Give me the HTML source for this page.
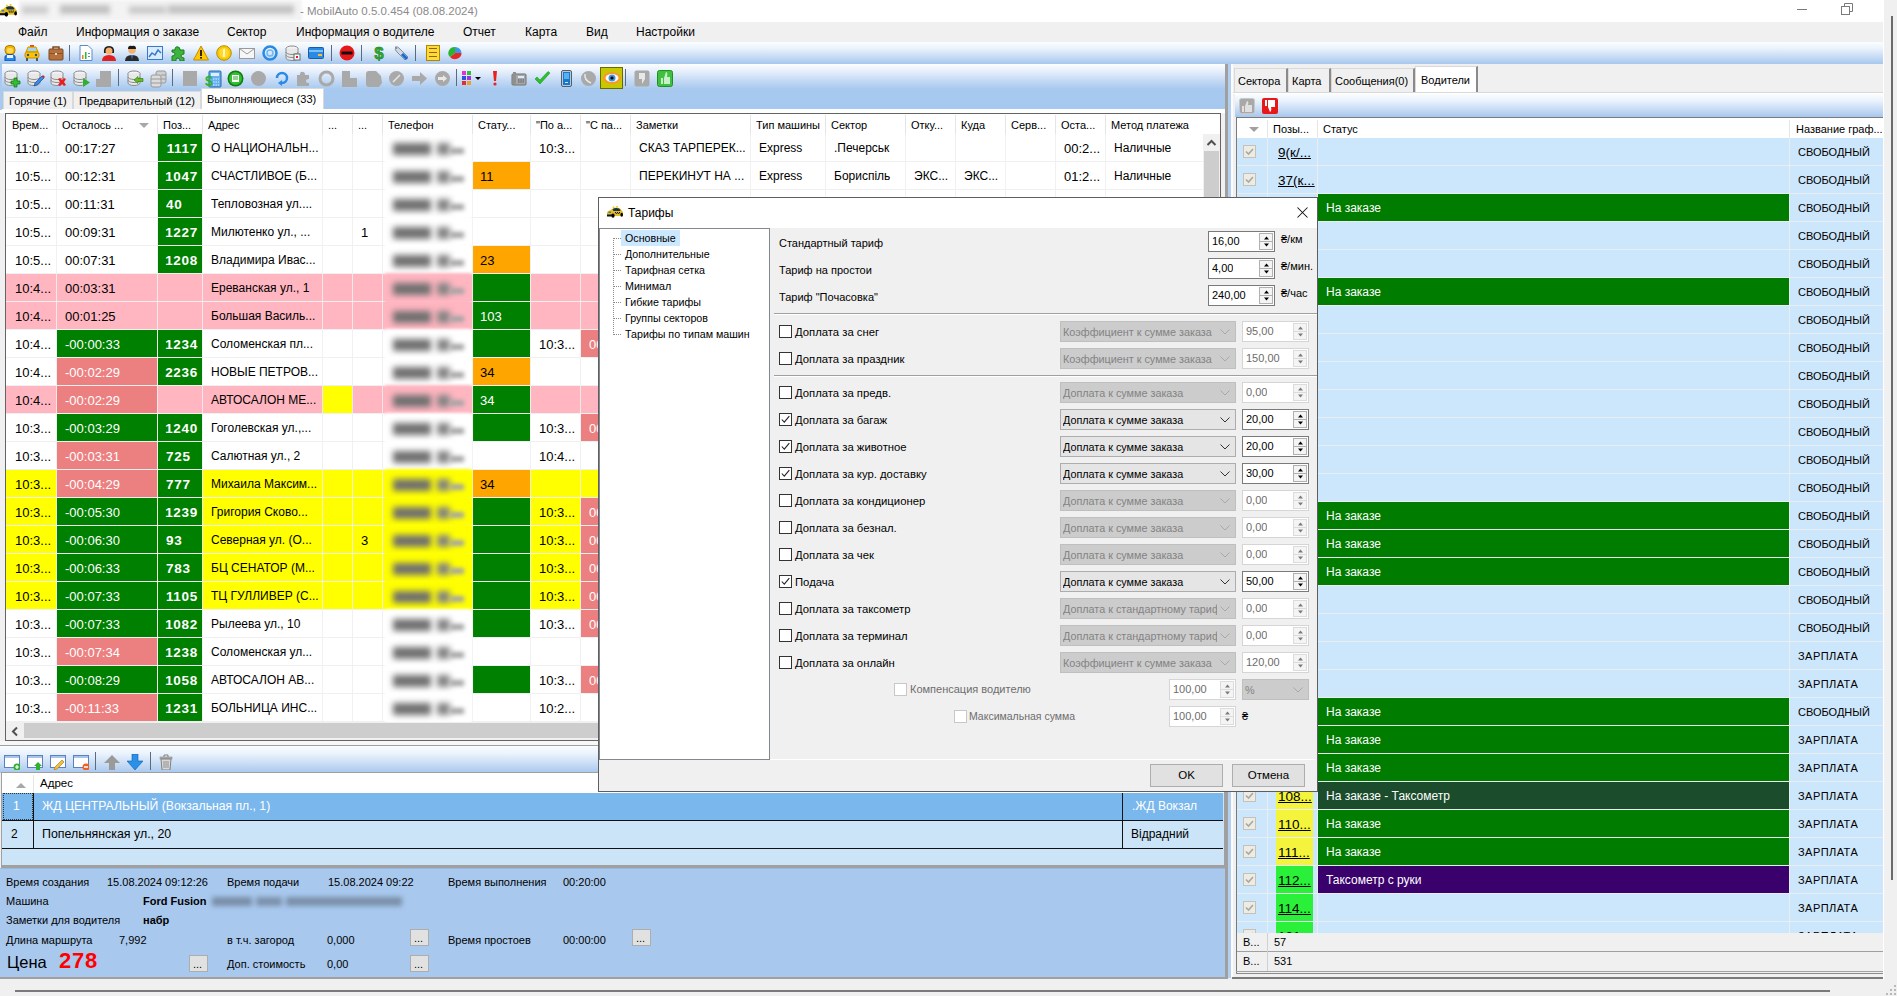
<!DOCTYPE html><html><head><meta charset="utf-8"><style>
*{box-sizing:border-box}
html,body{margin:0;padding:0;width:1897px;height:996px;overflow:hidden;background:#f0f0f0;font-family:"Liberation Sans",sans-serif;font-size:12px;color:#000}
.t{position:absolute;white-space:pre;line-height:14px}
.a{position:absolute}
.c{position:absolute;white-space:pre;overflow:hidden;line-height:27px}
</style></head><body>
<div class="a" style="left:0px;top:0px;width:1883px;height:22px;background:#fff"></div>
<div class="a" style="left:1883px;top:0px;width:14px;height:996px;background:#f0f0f0"></div>
<div class="a" style="left:1891px;top:16px;width:2px;height:864px;background:#6b6b6b"></div>
<div class="a" style="left:1883px;top:0px;width:1px;height:980px;background:#fff"></div>
<svg class="a" style="left:0;top:4px" width="17" height="13" viewBox="0 0 16 12"><path d="M5 3 Q6 1.5 9 1.5 Q13 1.5 14 3.5 L15 5 L16 6 V10 H0 V7 Q0 5 3 4.5 Z" fill="#e2be20"/><path d="M5.5 3.2 Q7 2 9.5 2 Q12.5 2 13.5 4 L13.2 5 H6.5 Z" fill="#17324e"/><circle cx="6.5" cy="1.3" r="1" fill="#f0cc30"/><circle cx="10" cy="0.8" r="1" fill="#f0cc30"/><path d="M8 6.5 H13.5 M8.8 7.5 H13" stroke="#111" stroke-dasharray="1 1" stroke-width="1"/><rect x="1.5" y="5.5" width="2.5" height="1.5" fill="#4a78a8"/><path d="M0 8.5 H7 V10.5 H0 Z" fill="#111"/><ellipse cx="6" cy="9.6" rx="1.6" ry="2.2" fill="#000"/><ellipse cx="14.7" cy="8.8" rx="1.3" ry="2" fill="#000"/></svg>
<div class="a" style="left:19px;top:0px;width:283px;height:21px;background:#f3f3f3;filter:blur(1.5px)"></div>
<div class="a" style="left:0px;top:0px;width:300px;height:20px;filter:blur(2.5px)"><div class="a" style="left:22px;top:6px;width:26px;height:8px;background:#cdcdcd"></div><div class="a" style="left:60px;top:5px;width:50px;height:9px;background:#c2c2c2"></div><div class="a" style="left:129px;top:6px;width:37px;height:8px;background:#cbcbcb"></div><div class="a" style="left:168px;top:5px;width:126px;height:9px;background:#c4c4c4"></div></div>
<div class="t" style="left:300px;top:4px;color:#8a8a8a;font-size:11.5px">- MobilAuto 0.5.0.454 (08.08.2024)</div>
<div class="a" style="left:1797px;top:9px;width:10px;height:1px;background:#7a7a7a"></div>
<svg class="a" style="left:1841px;top:3px" width="12" height="12"><rect x="0.5" y="3.5" width="8" height="8" fill="none" stroke="#7a7a7a"/><path d="M3.5 3.5 V0.5 H11.5 V8.5 H8.5" fill="none" stroke="#7a7a7a"/></svg>
<div class="t" style="left:18px;top:25px;font-size:12px">Файл</div>
<div class="t" style="left:76px;top:25px;font-size:12px">Информация о заказе</div>
<div class="t" style="left:227px;top:25px;font-size:12px">Сектор</div>
<div class="t" style="left:296px;top:25px;font-size:12px">Информация о водителе</div>
<div class="t" style="left:463px;top:25px;font-size:12px">Отчет</div>
<div class="t" style="left:525px;top:25px;font-size:12px">Карта</div>
<div class="t" style="left:586px;top:25px;font-size:12px">Вид</div>
<div class="t" style="left:636px;top:25px;font-size:12px">Настройки</div>
<div class="a" style="left:0px;top:42px;width:1883px;height:22px;background:linear-gradient(#fbfdff 0%,#e9f2fc 30%,#c9ddf5 65%,#a7c7ee 100%)"></div>
<svg class="a" style="left:2px;top:45px" width="16" height="16" viewBox="0 0 16 16"><rect x="3" y="0.5" width="10" height="9" rx="4" fill="#f5b800" stroke="#b07800"/><rect x="5" y="3" width="6" height="5" rx="2" fill="#ffd860"/><path d="M3 16 V12 Q3 9.5 8 9.5 Q13 9.5 13 12 V16 Z" fill="#2a88f0" stroke="#0b4fa0"/><rect x="5" y="10" width="6" height="3" fill="#e8f4ff"/></svg>
<svg class="a" style="left:24px;top:45px" width="16" height="16" viewBox="0 0 16 16"><rect x="6" y="0" width="4" height="2" fill="#e04040"/><path d="M2 7 L4 2 H12 L14 7 Z" fill="#ffd000" stroke="#c89400"/><rect x="1" y="7" width="14" height="6" rx="2" fill="#ffc000" stroke="#c89400"/><rect x="4" y="3" width="8" height="3" fill="#9fd4ff"/><circle cx="4" cy="10" r="1.2" fill="#2050a0"/><circle cx="12" cy="10" r="1.2" fill="#2050a0"/><rect x="2" y="13" width="2" height="3" fill="#555"/><rect x="12" y="13" width="2" height="3" fill="#555"/></svg>
<svg class="a" style="left:48px;top:45px" width="16" height="16" viewBox="0 0 16 16"><path d="M5 4 V2 H11 V4" fill="none" stroke="#7a4a20" stroke-width="1.5"/><rect x="1" y="4" width="14" height="11" rx="1" fill="#b8703a" stroke="#7a4a20"/><rect x="1" y="8" width="14" height="1" fill="#8c5228"/><circle cx="8" cy="9" r="1" fill="#fff"/></svg>
<svg class="a" style="left:78px;top:45px" width="16" height="16" viewBox="0 0 16 16"><path d="M2 0.5 H10 L14 4.5 V15.5 H2 Z" fill="#fff" stroke="#5a8cc8"/><rect x="4" y="10" width="1.5" height="4" fill="#f08020"/><rect x="7" y="7" width="1.5" height="7" fill="#20c020"/><rect x="10" y="8" width="2" height="1" fill="#5a8cc8"/><rect x="10" y="11" width="2" height="1" fill="#5a8cc8"/></svg>
<svg class="a" style="left:101px;top:45px" width="16" height="16" viewBox="0 0 16 16"><path d="M3 8 Q2 1 8 1 Q14 1 13 8 Z" fill="#1a1a1a"/><circle cx="8" cy="6" r="3.5" fill="#f5b070"/><path d="M1 16 Q1 10 8 10 Q15 10 15 16 Z" fill="#e02020"/></svg>
<svg class="a" style="left:124px;top:45px" width="16" height="16" viewBox="0 0 16 16"><circle cx="8" cy="5" r="3.8" fill="#f5b070"/><path d="M4 4 Q4 0 8 1 Q12 0 12 4 Z" fill="#1a1a1a"/><path d="M1 16 Q1 10 8 10 Q15 10 15 16 Z" fill="#2a2a2a"/><path d="M7 10 L8 15 L9 10 Z" fill="#3a7ad0"/></svg>
<svg class="a" style="left:147px;top:45px" width="16" height="16" viewBox="0 0 16 16"><rect x="0.5" y="1.5" width="15" height="13" fill="#d8ecff" stroke="#3a78c8"/><path d="M2 12 L5 8 L8 10 L11 5 L14 8" fill="none" stroke="#3a78c8" stroke-width="1.5"/></svg>
<svg class="a" style="left:170px;top:45px" width="16" height="16" viewBox="0 0 16 16"><path d="M2 5 H5 Q5 1 8 2 Q10 2 10 5 H14 V9 Q11 9 11 11 Q11 13 14 13 V16 H10 Q10 13 8 13 Q5 13 6 16 H2 V11 Q5 11 5 9 Q5 7 2 7 Z" fill="#3cb43c" stroke="#1e7a1e"/></svg>
<svg class="a" style="left:193px;top:45px" width="16" height="16" viewBox="0 0 16 16"><path d="M8 1 L15.5 15 H0.5 Z" fill="#ffc800" stroke="#c88a00"/><rect x="7.2" y="5" width="1.6" height="6" fill="#000"/><rect x="7.2" y="12" width="1.6" height="1.6" fill="#000"/></svg>
<svg class="a" style="left:216px;top:45px" width="16" height="16" viewBox="0 0 16 16"><circle cx="8" cy="8" r="7.3" fill="#f7c800" stroke="#c08c00"/><circle cx="8" cy="8" r="5" fill="#ffd930"/><path d="M7 4.5 L9 3.5 V12 H7 Z" fill="#fff6c0"/></svg>
<svg class="a" style="left:239px;top:45px" width="16" height="16" viewBox="0 0 16 16"><rect x="0.5" y="3.5" width="15" height="10" fill="#f6f6f6" stroke="#9a9a9a"/><path d="M0.5 3.5 L8 9 L15.5 3.5" fill="none" stroke="#9a9a9a"/></svg>
<svg class="a" style="left:262px;top:45px" width="16" height="16" viewBox="0 0 16 16"><circle cx="8" cy="8" r="6.5" fill="none" stroke="#2a8ae0" stroke-width="2.5"/><circle cx="8" cy="8" r="3" fill="none" stroke="#6ab8f8" stroke-width="1.5"/></svg>
<svg class="a" style="left:285px;top:45px" width="16" height="16" viewBox="0 0 16 16"><ellipse cx="7" cy="3.5" rx="6" ry="2.5" fill="#f4f4f4" stroke="#8c8c8c"/><path d="M1 3.5 V13 A6 2.5 0 0 0 13 13 V3.5" fill="#e8e8e8" stroke="#8c8c8c"/><path d="M1 7 A6 2.5 0 0 0 13 7 M1 10 A6 2.5 0 0 0 13 10" fill="none" stroke="#8c8c8c"/><rect x="9" y="9" width="6" height="6" fill="#fff" stroke="#666"/><rect x="11" y="11" width="2" height="2" fill="#e02020"/></svg>
<svg class="a" style="left:308px;top:45px" width="16" height="16" viewBox="0 0 16 16"><rect x="0.5" y="2.5" width="15" height="11" rx="1" fill="#2a8ae0" stroke="#1a5aa8"/><rect x="1" y="5" width="14" height="2" fill="#7ac0ff"/><rect x="10" y="9" width="4" height="2" fill="#f5c040"/></svg>
<svg class="a" style="left:339px;top:45px" width="16" height="16" viewBox="0 0 16 16"><circle cx="8" cy="8" r="7.5" fill="#e81818"/><rect x="2.5" y="6.5" width="11" height="3" fill="#111"/></svg>
<svg class="a" style="left:371px;top:45px" width="16" height="16" viewBox="0 0 16 16"><text x="8" y="14" font-family="Liberation Sans" font-weight="bold" font-size="17" text-anchor="middle" fill="#2cae2c" stroke="#1a7a1a" stroke-width="0.5">$</text></svg>
<svg class="a" style="left:393px;top:45px" width="16" height="16" viewBox="0 0 16 16"><path d="M3 2 Q1 5 4 7 L12 15 L15 12 L7 4 Q5 1 2 2 L4 4 Z" fill="#d0d8e0" stroke="#8090a0"/><path d="M9 9 L14 14" stroke="#1a6ad0" stroke-width="3"/></svg>
<svg class="a" style="left:425px;top:45px" width="16" height="16" viewBox="0 0 16 16"><rect x="1.5" y="0.5" width="13" height="15" fill="#ffd83a" stroke="#b08800"/><rect x="4" y="3" width="8" height="1" fill="#8a6a00"/><rect x="4" y="7" width="8" height="1" fill="#8a6a00"/><rect x="4" y="11" width="8" height="1" fill="#8a6a00"/></svg>
<svg class="a" style="left:447px;top:45px" width="16" height="16" viewBox="0 0 16 16"><path d="M8 8 L8 2 A6.5 6 0 0 1 14.5 8 Z" fill="#3a9ae8"/><path d="M8 8 L14.5 8 A6.5 6 0 0 1 3 12 Z" fill="#e82828"/><path d="M8 8 L3 12 A6.5 6 0 0 1 8 2 Z" fill="#2cb42c"/></svg>
<div class="a" style="left:69px;top:45px;width:1px;height:16px;background:#5a6a80"></div>
<div class="a" style="left:331px;top:45px;width:1px;height:16px;background:#5a6a80"></div>
<div class="a" style="left:361px;top:45px;width:1px;height:16px;background:#5a6a80"></div>
<div class="a" style="left:415px;top:45px;width:1px;height:16px;background:#5a6a80"></div>
<div class="a" style="left:0px;top:64px;width:1225px;height:46px;background:linear-gradient(#fdfeff 0px,#e4eefb 8px,#c6dbf5 16px,#a8c9ef 25px,#a6c8ef 46px)"></div>
<svg class="a" style="left:4px;top:70px" width="18" height="18" viewBox="0 0 18 18"><ellipse cx="7" cy="3.5" rx="6" ry="2.5" fill="#f4f4f4" stroke="#8c8c8c"/><path d="M1 3.5 V13 A6 2.5 0 0 0 13 13 V3.5" fill="#e8e8e8" stroke="#8c8c8c"/><path d="M1 7 A6 2.5 0 0 0 13 7 M1 10 A6 2.5 0 0 0 13 10" fill="none" stroke="#8c8c8c"/><path d="M10 8 H13 V11 H16 V14 H13 V17 H10 V14 H7 V11 H10 Z" fill="#30c030" stroke="#107010" stroke-width="0.7"/></svg>
<svg class="a" style="left:27px;top:70px" width="18" height="18" viewBox="0 0 18 18"><ellipse cx="7" cy="3.5" rx="6" ry="2.5" fill="#f4f4f4" stroke="#8c8c8c"/><path d="M1 3.5 V13 A6 2.5 0 0 0 13 13 V3.5" fill="#e8e8e8" stroke="#8c8c8c"/><path d="M1 7 A6 2.5 0 0 0 13 7 M1 10 A6 2.5 0 0 0 13 10" fill="none" stroke="#8c8c8c"/><path d="M7 16 L8 13 L15 6 L17 8 L10 15 Z" fill="#3a8ae8" stroke="#1a4a98" stroke-width="0.7"/><path d="M15 6 L17 8 L18 7 L16 5 Z" fill="#e02020"/></svg>
<svg class="a" style="left:50px;top:70px" width="18" height="18" viewBox="0 0 18 18"><ellipse cx="7" cy="3.5" rx="6" ry="2.5" fill="#f4f4f4" stroke="#8c8c8c"/><path d="M1 3.5 V13 A6 2.5 0 0 0 13 13 V3.5" fill="#e8e8e8" stroke="#8c8c8c"/><path d="M1 7 A6 2.5 0 0 0 13 7 M1 10 A6 2.5 0 0 0 13 10" fill="none" stroke="#8c8c8c"/><path d="M8 9 L10 8 L12 10 L14 8 L16 9 L14 12 L16 15 L14 16 L12 14 L10 16 L8 15 L10 12 Z" fill="#e82020"/></svg>
<svg class="a" style="left:73px;top:70px" width="18" height="18" viewBox="0 0 18 18"><ellipse cx="7" cy="3.5" rx="6" ry="2.5" fill="#f4f4f4" stroke="#8c8c8c"/><path d="M1 3.5 V13 A6 2.5 0 0 0 13 13 V3.5" fill="#e8e8e8" stroke="#8c8c8c"/><path d="M1 7 A6 2.5 0 0 0 13 7 M1 10 A6 2.5 0 0 0 13 10" fill="none" stroke="#8c8c8c"/><path d="M10 8 L17 12.5 L10 17 Z" fill="#30b030"/></svg>
<svg class="a" style="left:96px;top:70px" width="18" height="18" viewBox="0 0 18 18"><path d="M4 1 H15 V17 H0 V9 H4 Z" fill="#a9a9a9"/></svg>
<svg class="a" style="left:127px;top:70px" width="18" height="18" viewBox="0 0 18 18"><ellipse cx="7" cy="3.5" rx="6" ry="2.5" fill="#f4f4f4" stroke="#8c8c8c"/><path d="M1 3.5 V13 A6 2.5 0 0 0 13 13 V3.5" fill="#e8e8e8" stroke="#8c8c8c"/><path d="M1 7 A6 2.5 0 0 0 13 7 M1 10 A6 2.5 0 0 0 13 10" fill="none" stroke="#8c8c8c"/><path d="M7 10 L11 6.5 V8.5 H16 V11.5 H11 V13.5 Z" fill="#60c020" stroke="#307010" stroke-width="0.6"/></svg>
<svg class="a" style="left:150px;top:70px" width="18" height="18" viewBox="0 0 18 18"><rect x="6" y="1" width="10" height="12" rx="2" fill="#d0d0d0" stroke="#9a9a9a"/><rect x="1" y="5" width="10" height="12" rx="2" fill="#dcdcdc" stroke="#9a9a9a"/><path d="M1 9 H11 M1 13 H11 M11 5 H16 M11 9 H16" stroke="#9a9a9a"/></svg>
<svg class="a" style="left:182px;top:70px" width="18" height="18" viewBox="0 0 18 18"><rect x="1" y="1" width="14" height="15" fill="#a9a9a9"/></svg>
<svg class="a" style="left:204px;top:70px" width="18" height="18" viewBox="0 0 18 18"><rect x="5" y="1" width="12" height="16" rx="1" fill="#6ab0f0" stroke="#2a6aa8"/><rect x="7" y="3" width="8" height="3" fill="#d8f0ff"/><path d="M9 9 H15 M9 12 H15 M9 15 H15" stroke="#d8f0ff" stroke-dasharray="1.5 1"/><text x="5" y="16" font-family="Liberation Sans" font-weight="bold" font-size="14" text-anchor="middle" fill="#30b030">$</text></svg>
<svg class="a" style="left:227px;top:70px" width="18" height="18" viewBox="0 0 18 18"><circle cx="8.5" cy="8.5" r="8" fill="#107a10"/><circle cx="8.5" cy="8.5" r="6.5" fill="#30c030"/><rect x="5" y="5" width="7" height="7" fill="#fff"/><path d="M6 7 H11 M6 9 H11" stroke="#30a030"/></svg>
<svg class="a" style="left:250px;top:70px" width="18" height="18" viewBox="0 0 18 18"><circle cx="8.5" cy="8.5" r="7.5" fill="#a9a9a9"/></svg>
<svg class="a" style="left:273px;top:70px" width="18" height="18" viewBox="0 0 18 18"><path d="M4 8 A5 5 0 1 1 9 13" fill="none" stroke="#2a8ae8" stroke-width="2.5"/><path d="M9 10 V16 L5 13 Z" fill="#2a8ae8"/></svg>
<svg class="a" style="left:295px;top:70px" width="18" height="18" viewBox="0 0 18 18"><path d="M2 5 H5 Q5 1 8 2 Q10 2 10 5 H14 V9 Q11 9 11 11 Q11 13 14 13 V16 H2 Z" fill="#a9a9a9"/></svg>
<svg class="a" style="left:318px;top:70px" width="18" height="18" viewBox="0 0 18 18"><circle cx="8.5" cy="8.5" r="6.5" fill="none" stroke="#a9a9a9" stroke-width="3"/></svg>
<svg class="a" style="left:341px;top:70px" width="18" height="18" viewBox="0 0 18 18"><path d="M1 1 H9 V8 H16 V17 H1 Z" fill="#a9a9a9"/></svg>
<svg class="a" style="left:366px;top:70px" width="18" height="18" viewBox="0 0 18 18"><path d="M0 4 Q0 1 3 1 H10 L15 6 L16 13 L13 17 H3 Q0 17 0 14 Z" fill="#a9a9a9"/></svg>
<svg class="a" style="left:388px;top:70px" width="18" height="18" viewBox="0 0 18 18"><circle cx="8.5" cy="8.5" r="7.5" fill="#a9a9a9"/><path d="M5 12 L12 5" stroke="#e8e8e8" stroke-width="1.5"/></svg>
<svg class="a" style="left:411px;top:70px" width="18" height="18" viewBox="0 0 18 18"><path d="M1 6 H9 V2 L16 8.5 L9 15 V11 H1 Z" fill="#a9a9a9"/></svg>
<svg class="a" style="left:434px;top:70px" width="18" height="18" viewBox="0 0 18 18"><circle cx="8.5" cy="8.5" r="7.5" fill="#a9a9a9"/><path d="M4 7 H9 V5 L13 8.5 L9 12 V10 H4 Z" fill="#e8e8e8"/></svg>
<svg class="a" style="left:462px;top:70px" width="20" height="18" viewBox="0 0 20 18"><rect x="0" y="1" width="4" height="4" fill="#e030e0"/><rect x="5" y="1" width="4" height="4" fill="#30c030"/><rect x="0" y="6" width="4" height="4" fill="#3050e0"/><rect x="5" y="6" width="4" height="4" fill="#a030e0"/><rect x="0" y="11" width="4" height="4" fill="#e03030"/><rect x="5" y="11" width="4" height="4" fill="#f0a020"/><path d="M13 7 H19 L16 10 Z" fill="#000"/></svg>
<svg class="a" style="left:492px;top:70px" width="18" height="18" viewBox="0 0 18 18"><path d="M1 1 H5 L4 11 H2 Z" fill="#e82020"/><circle cx="3" cy="14" r="1.6" fill="#e82020"/></svg>
<svg class="a" style="left:511px;top:70px" width="18" height="18" viewBox="0 0 18 18"><rect x="1" y="4" width="14" height="11" rx="1" fill="#a8a8a8" stroke="#707070"/><rect x="2" y="2" width="3" height="12" fill="#909090"/><rect x="7" y="6" width="6" height="2" fill="#d8ecff"/><path d="M7 10 H13 M7 12 H13" stroke="#555" stroke-dasharray="1.5 0.8"/></svg>
<svg class="a" style="left:534px;top:70px" width="18" height="18" viewBox="0 0 18 18"><path d="M1 9 L6 14 L16 3 L14 1.5 L6 10 L3 7 Z" fill="#2cc02c" stroke="#1a8a1a" stroke-width="0.5"/></svg>
<svg class="a" style="left:560px;top:70px" width="18" height="18" viewBox="0 0 18 18"><rect x="1.5" y="0.5" width="10" height="16" rx="1.5" fill="#b8c8d8" stroke="#506070"/><rect x="3" y="2" width="7" height="13" fill="#1a78c8"/><rect x="4" y="3" width="5" height="6" fill="#58b0f0"/><rect x="5" y="12" width="3" height="1" fill="#c8e8ff"/></svg>
<svg class="a" style="left:580px;top:70px" width="18" height="18" viewBox="0 0 18 18"><circle cx="8.5" cy="8.5" r="7.5" fill="#a9a9a9"/><path d="M5 4 Q4 10 11 13" stroke="#e8e8e8" stroke-width="1.5" fill="none"/></svg>
<svg class="a" style="left:634px;top:70px" width="18" height="18" viewBox="0 0 18 18"><rect x="0.5" y="0.5" width="15" height="16" rx="2" fill="#a9a9a9"/><path d="M5 3 H11 V9 L8 14 V9 H5 Z" fill="#e8e8e8"/></svg>
<svg class="a" style="left:657px;top:70px" width="18" height="18" viewBox="0 0 18 18"><rect x="0.5" y="0.5" width="15" height="16" rx="2" fill="#40c040" stroke="#209020"/><path d="M4 8 H6 V14 H4 Z M7 8 L9 2 Q11 2 10 7 H13 V14 H7 Z" fill="#c8f0c8"/></svg>
<div class="a" style="left:600px;top:67px;width:23px;height:22px;background:#c8c800;border:1px solid #6a6a00"></div>
<svg class="a" style="left:602px;top:71px" width="20" height="14" viewBox="0 0 20 14"><ellipse cx="10" cy="7" rx="9" ry="6" fill="#f89830"/><ellipse cx="10" cy="7" rx="6.5" ry="4" fill="#fff"/><circle cx="10" cy="7" r="3.5" fill="#3a98e0"/><circle cx="10" cy="7" r="1.6" fill="#000"/></svg>
<div class="a" style="left:118px;top:69px;width:1px;height:17px;background:#5a6a80"></div>
<div class="a" style="left:172px;top:69px;width:1px;height:17px;background:#5a6a80"></div>
<div class="a" style="left:456px;top:69px;width:1px;height:17px;background:#5a6a80"></div>
<div class="a" style="left:625px;top:69px;width:1px;height:17px;background:#5a6a80"></div>
<div class="a" style="left:0px;top:109px;width:1225px;height:637px;background:#f0f0f0"></div>
<div class="a" style="left:0px;top:109px;width:1225px;height:4px;background:#fff"></div>
<div class="a" style="left:0px;top:64px;width:2px;height:46px;background:#a9c9ee"></div>
<div class="a" style="left:3px;top:91px;width:70px;height:18px;background:#f0f0f0;border:1px solid #d9d9d9;border-bottom:none"></div>
<div class="t" style="left:9px;top:94px;font-size:11px">Горячие (1)</div>
<div class="a" style="left:73px;top:91px;width:128px;height:18px;background:#f0f0f0;border:1px solid #d9d9d9;border-bottom:none"></div>
<div class="t" style="left:79px;top:94px;font-size:11px">Предварительный (12)</div>
<div class="a" style="left:201px;top:88px;width:123px;height:21px;background:#fff;border:1px solid #d9d9d9;border-bottom:none"></div>
<div class="t" style="left:207px;top:92px;font-size:11px">Выполняющиеся (33)</div>
<div class="a" style="left:5px;top:113px;width:1216px;height:628px;background:#fff;border:1px solid #646464"></div>
<div class="t" style="left:12px;top:118px;font-size:11px">Врем...</div>
<div class="a" style="left:56px;top:115px;width:1px;height:19px;background:#e5e5e5"></div>
<div class="t" style="left:62px;top:118px;font-size:11px">Осталось ...</div>
<div class="a" style="left:157px;top:115px;width:1px;height:19px;background:#e5e5e5"></div>
<div class="t" style="left:163px;top:118px;font-size:11px">Поз...</div>
<div class="a" style="left:202px;top:115px;width:1px;height:19px;background:#e5e5e5"></div>
<div class="t" style="left:208px;top:118px;font-size:11px">Адрес</div>
<div class="a" style="left:322px;top:115px;width:1px;height:19px;background:#e5e5e5"></div>
<div class="t" style="left:328px;top:118px;font-size:11px">...</div>
<div class="a" style="left:352px;top:115px;width:1px;height:19px;background:#e5e5e5"></div>
<div class="t" style="left:358px;top:118px;font-size:11px">...</div>
<div class="a" style="left:382px;top:115px;width:1px;height:19px;background:#e5e5e5"></div>
<div class="t" style="left:388px;top:118px;font-size:11px">Телефон</div>
<div class="a" style="left:472px;top:115px;width:1px;height:19px;background:#e5e5e5"></div>
<div class="t" style="left:478px;top:118px;font-size:11px">Стату...</div>
<div class="a" style="left:530px;top:115px;width:1px;height:19px;background:#e5e5e5"></div>
<div class="t" style="left:536px;top:118px;font-size:11px">"По а...</div>
<div class="a" style="left:580px;top:115px;width:1px;height:19px;background:#e5e5e5"></div>
<div class="t" style="left:586px;top:118px;font-size:11px">"С па...</div>
<div class="a" style="left:630px;top:115px;width:1px;height:19px;background:#e5e5e5"></div>
<div class="t" style="left:636px;top:118px;font-size:11px">Заметки</div>
<div class="a" style="left:750px;top:115px;width:1px;height:19px;background:#e5e5e5"></div>
<div class="t" style="left:756px;top:118px;font-size:11px">Тип машины</div>
<div class="a" style="left:825px;top:115px;width:1px;height:19px;background:#e5e5e5"></div>
<div class="t" style="left:831px;top:118px;font-size:11px">Сектор</div>
<div class="a" style="left:905px;top:115px;width:1px;height:19px;background:#e5e5e5"></div>
<div class="t" style="left:911px;top:118px;font-size:11px">Отку...</div>
<div class="a" style="left:955px;top:115px;width:1px;height:19px;background:#e5e5e5"></div>
<div class="t" style="left:961px;top:118px;font-size:11px">Куда</div>
<div class="a" style="left:1005px;top:115px;width:1px;height:19px;background:#e5e5e5"></div>
<div class="t" style="left:1011px;top:118px;font-size:11px">Серв...</div>
<div class="a" style="left:1055px;top:115px;width:1px;height:19px;background:#e5e5e5"></div>
<div class="t" style="left:1061px;top:118px;font-size:11px">Оста...</div>
<div class="a" style="left:1105px;top:115px;width:1px;height:19px;background:#e5e5e5"></div>
<div class="t" style="left:1111px;top:118px;font-size:11px">Метод платежа</div>
<svg class="a" style="left:139px;top:123px" width="10" height="6" viewBox="0 0 10 6"><path d="M0 0 H10 L5 5 Z" fill="#a8a8a8"/></svg>
<div class="a" style="left:6px;top:161px;width:1197px;height:1px;background:#f0f0f0"></div>
<div class="a" style="left:6px;top:189px;width:1197px;height:1px;background:#f0f0f0"></div>
<div class="a" style="left:6px;top:217px;width:1197px;height:1px;background:#f0f0f0"></div>
<div class="a" style="left:6px;top:245px;width:1197px;height:1px;background:#f0f0f0"></div>
<div class="a" style="left:6px;top:273px;width:1197px;height:1px;background:#f0f0f0"></div>
<div class="a" style="left:6px;top:274px;width:1197px;height:27px;background:#ffb6c1"></div>
<div class="a" style="left:6px;top:301px;width:1197px;height:1px;background:#f0f0f0"></div>
<div class="a" style="left:6px;top:302px;width:1197px;height:27px;background:#ffb6c1"></div>
<div class="a" style="left:6px;top:329px;width:1197px;height:1px;background:#f0f0f0"></div>
<div class="a" style="left:6px;top:357px;width:1197px;height:1px;background:#f0f0f0"></div>
<div class="a" style="left:6px;top:385px;width:1197px;height:1px;background:#f0f0f0"></div>
<div class="a" style="left:6px;top:386px;width:1197px;height:27px;background:#ffb6c1"></div>
<div class="a" style="left:6px;top:413px;width:1197px;height:1px;background:#f0f0f0"></div>
<div class="a" style="left:6px;top:441px;width:1197px;height:1px;background:#f0f0f0"></div>
<div class="a" style="left:6px;top:469px;width:1197px;height:1px;background:#f0f0f0"></div>
<div class="a" style="left:6px;top:470px;width:1197px;height:27px;background:#ffff00"></div>
<div class="a" style="left:6px;top:497px;width:1197px;height:1px;background:#f0f0f0"></div>
<div class="a" style="left:6px;top:498px;width:1197px;height:27px;background:#ffff00"></div>
<div class="a" style="left:6px;top:525px;width:1197px;height:1px;background:#f0f0f0"></div>
<div class="a" style="left:6px;top:526px;width:1197px;height:27px;background:#ffff00"></div>
<div class="a" style="left:6px;top:553px;width:1197px;height:1px;background:#f0f0f0"></div>
<div class="a" style="left:6px;top:554px;width:1197px;height:27px;background:#ffff00"></div>
<div class="a" style="left:6px;top:581px;width:1197px;height:1px;background:#f0f0f0"></div>
<div class="a" style="left:6px;top:582px;width:1197px;height:27px;background:#ffff00"></div>
<div class="a" style="left:6px;top:609px;width:1197px;height:1px;background:#f0f0f0"></div>
<div class="a" style="left:6px;top:637px;width:1197px;height:1px;background:#f0f0f0"></div>
<div class="a" style="left:6px;top:665px;width:1197px;height:1px;background:#f0f0f0"></div>
<div class="a" style="left:6px;top:693px;width:1197px;height:1px;background:#f0f0f0"></div>
<div class="a" style="left:6px;top:721px;width:1197px;height:1px;background:#f0f0f0"></div>
<div class="c" style="left:15px;width:41px;top:135px;height:27px;font-size:13px;font-weight:normal;color:#000;letter-spacing:0px">11:0...</div>
<div class="c" style="left:65px;width:92px;top:135px;height:27px;font-size:13px;font-weight:normal;color:#000;letter-spacing:0px">00:17:27</div>
<div class="a" style="left:158px;top:134px;width:44px;height:27px;background:#008000"></div>
<div class="c" style="left:158px;width:40px;text-align:right;top:135px;height:27px;font-size:13.5px;font-weight:bold;color:#fff;letter-spacing:0.7px">1117</div>
<div class="c" style="left:211px;width:111px;top:135px;height:27px;font-size:12px;font-weight:normal;color:#000;letter-spacing:0px">О НАЦИОНАЛЬН...</div>
<div class="c" style="left:539px;width:41px;top:135px;height:27px;font-size:13px;font-weight:normal;color:#000;letter-spacing:0px">10:3...</div>
<div class="c" style="left:639px;width:111px;top:135px;height:27px;font-size:12px;font-weight:normal;color:#000;letter-spacing:0px">СКАЗ ТАРПЕРЕК...</div>
<div class="c" style="left:759px;width:66px;top:135px;height:27px;font-size:12px;font-weight:normal;color:#000;letter-spacing:0px">Express</div>
<div class="c" style="left:834px;width:71px;top:135px;height:27px;font-size:12px;font-weight:normal;color:#000;letter-spacing:0px">.Печерськ</div>
<div class="c" style="left:1064px;width:41px;top:135px;height:27px;font-size:13px;font-weight:normal;color:#000;letter-spacing:0px">00:2...</div>
<div class="c" style="left:1114px;width:89px;top:135px;height:27px;font-size:12px;font-weight:normal;color:#000;letter-spacing:0px">Наличные</div>
<div class="c" style="left:15px;width:41px;top:163px;height:27px;font-size:13px;font-weight:normal;color:#000;letter-spacing:0px">10:5...</div>
<div class="c" style="left:65px;width:92px;top:163px;height:27px;font-size:13px;font-weight:normal;color:#000;letter-spacing:0px">00:12:31</div>
<div class="a" style="left:158px;top:162px;width:44px;height:27px;background:#008000"></div>
<div class="c" style="left:158px;width:40px;text-align:right;top:163px;height:27px;font-size:13.5px;font-weight:bold;color:#fff;letter-spacing:0.7px">1047</div>
<div class="c" style="left:211px;width:111px;top:163px;height:27px;font-size:12px;font-weight:normal;color:#000;letter-spacing:0px">СЧАСТЛИВОЕ (Б...</div>
<div class="a" style="left:473px;top:162px;width:57px;height:27px;background:#ffa500"></div>
<div class="c" style="left:480px;width:50px;top:163px;height:27px;font-size:13px;font-weight:normal;color:#000;letter-spacing:0px">11</div>
<div class="c" style="left:639px;width:111px;top:163px;height:27px;font-size:12px;font-weight:normal;color:#000;letter-spacing:0px">ПЕРЕКИНУТ НА ...</div>
<div class="c" style="left:759px;width:66px;top:163px;height:27px;font-size:12px;font-weight:normal;color:#000;letter-spacing:0px">Express</div>
<div class="c" style="left:834px;width:71px;top:163px;height:27px;font-size:12px;font-weight:normal;color:#000;letter-spacing:0px">Бориспіль</div>
<div class="c" style="left:914px;width:41px;top:163px;height:27px;font-size:12px;font-weight:normal;color:#000;letter-spacing:0px">ЭКС...</div>
<div class="c" style="left:964px;width:41px;top:163px;height:27px;font-size:12px;font-weight:normal;color:#000;letter-spacing:0px">ЭКС...</div>
<div class="c" style="left:1064px;width:41px;top:163px;height:27px;font-size:13px;font-weight:normal;color:#000;letter-spacing:0px">01:2...</div>
<div class="c" style="left:1114px;width:89px;top:163px;height:27px;font-size:12px;font-weight:normal;color:#000;letter-spacing:0px">Наличные</div>
<div class="c" style="left:15px;width:41px;top:191px;height:27px;font-size:13px;font-weight:normal;color:#000;letter-spacing:0px">10:5...</div>
<div class="c" style="left:65px;width:92px;top:191px;height:27px;font-size:13px;font-weight:normal;color:#000;letter-spacing:0px">00:11:31</div>
<div class="a" style="left:158px;top:190px;width:44px;height:27px;background:#008000"></div>
<div class="c" style="left:166px;width:38px;top:191px;height:27px;font-size:13.5px;font-weight:bold;color:#fff;letter-spacing:0.7px">40</div>
<div class="c" style="left:211px;width:111px;top:191px;height:27px;font-size:12px;font-weight:normal;color:#000;letter-spacing:0px">Тепловозная ул....</div>
<div class="c" style="left:15px;width:41px;top:219px;height:27px;font-size:13px;font-weight:normal;color:#000;letter-spacing:0px">10:5...</div>
<div class="c" style="left:65px;width:92px;top:219px;height:27px;font-size:13px;font-weight:normal;color:#000;letter-spacing:0px">00:09:31</div>
<div class="a" style="left:158px;top:218px;width:44px;height:27px;background:#008000"></div>
<div class="c" style="left:158px;width:40px;text-align:right;top:219px;height:27px;font-size:13.5px;font-weight:bold;color:#fff;letter-spacing:0.7px">1227</div>
<div class="c" style="left:211px;width:111px;top:219px;height:27px;font-size:12px;font-weight:normal;color:#000;letter-spacing:0px">Милютенко ул., ...</div>
<div class="c" style="left:361px;width:21px;top:219px;height:27px;font-size:13px;font-weight:normal;color:#000;letter-spacing:0px">1</div>
<div class="c" style="left:15px;width:41px;top:247px;height:27px;font-size:13px;font-weight:normal;color:#000;letter-spacing:0px">10:5...</div>
<div class="c" style="left:65px;width:92px;top:247px;height:27px;font-size:13px;font-weight:normal;color:#000;letter-spacing:0px">00:07:31</div>
<div class="a" style="left:158px;top:246px;width:44px;height:27px;background:#008000"></div>
<div class="c" style="left:158px;width:40px;text-align:right;top:247px;height:27px;font-size:13.5px;font-weight:bold;color:#fff;letter-spacing:0.7px">1208</div>
<div class="c" style="left:211px;width:111px;top:247px;height:27px;font-size:12px;font-weight:normal;color:#000;letter-spacing:0px">Владимира Ивас...</div>
<div class="a" style="left:473px;top:246px;width:57px;height:27px;background:#ffa500"></div>
<div class="c" style="left:480px;width:50px;top:247px;height:27px;font-size:13px;font-weight:normal;color:#000;letter-spacing:0px">23</div>
<div class="c" style="left:15px;width:41px;top:275px;height:27px;font-size:13px;font-weight:normal;color:#000;letter-spacing:0px">10:4...</div>
<div class="c" style="left:65px;width:92px;top:275px;height:27px;font-size:13px;font-weight:normal;color:#000;letter-spacing:0px">00:03:31</div>
<div class="c" style="left:211px;width:111px;top:275px;height:27px;font-size:12px;font-weight:normal;color:#000;letter-spacing:0px">Ереванская ул., 1</div>
<div class="a" style="left:473px;top:274px;width:57px;height:27px;background:#008000"></div>
<div class="c" style="left:15px;width:41px;top:303px;height:27px;font-size:13px;font-weight:normal;color:#000;letter-spacing:0px">10:4...</div>
<div class="c" style="left:65px;width:92px;top:303px;height:27px;font-size:13px;font-weight:normal;color:#000;letter-spacing:0px">00:01:25</div>
<div class="c" style="left:211px;width:111px;top:303px;height:27px;font-size:12px;font-weight:normal;color:#000;letter-spacing:0px">Большая Василь...</div>
<div class="a" style="left:473px;top:302px;width:57px;height:27px;background:#008000"></div>
<div class="c" style="left:480px;width:50px;top:303px;height:27px;font-size:13px;font-weight:normal;color:#fff;letter-spacing:0px">103</div>
<div class="c" style="left:15px;width:41px;top:331px;height:27px;font-size:13px;font-weight:normal;color:#000;letter-spacing:0px">10:4...</div>
<div class="a" style="left:57px;top:330px;width:100px;height:27px;background:#008000"></div>
<div class="c" style="left:65px;width:92px;top:331px;height:27px;font-size:13px;font-weight:normal;color:#fff;letter-spacing:0px">-00:00:33</div>
<div class="a" style="left:158px;top:330px;width:44px;height:27px;background:#008000"></div>
<div class="c" style="left:158px;width:40px;text-align:right;top:331px;height:27px;font-size:13.5px;font-weight:bold;color:#fff;letter-spacing:0.7px">1234</div>
<div class="c" style="left:211px;width:111px;top:331px;height:27px;font-size:12px;font-weight:normal;color:#000;letter-spacing:0px">Соломенская пл...</div>
<div class="a" style="left:473px;top:330px;width:57px;height:27px;background:#008000"></div>
<div class="c" style="left:539px;width:41px;top:331px;height:27px;font-size:13px;font-weight:normal;color:#000;letter-spacing:0px">10:3...</div>
<div class="a" style="left:581px;top:330px;width:49px;height:27px;background:#ec8080"></div>
<div class="c" style="left:589px;width:41px;top:331px;height:27px;font-size:13px;font-weight:normal;color:#fff;letter-spacing:0px">00</div>
<div class="c" style="left:15px;width:41px;top:359px;height:27px;font-size:13px;font-weight:normal;color:#000;letter-spacing:0px">10:4...</div>
<div class="a" style="left:57px;top:358px;width:100px;height:27px;background:#ec8080"></div>
<div class="c" style="left:65px;width:92px;top:359px;height:27px;font-size:13px;font-weight:normal;color:#fff;letter-spacing:0px">-00:02:29</div>
<div class="a" style="left:158px;top:358px;width:44px;height:27px;background:#008000"></div>
<div class="c" style="left:158px;width:40px;text-align:right;top:359px;height:27px;font-size:13.5px;font-weight:bold;color:#fff;letter-spacing:0.7px">2236</div>
<div class="c" style="left:211px;width:111px;top:359px;height:27px;font-size:12px;font-weight:normal;color:#000;letter-spacing:0px">НОВЫЕ ПЕТРОВ...</div>
<div class="a" style="left:473px;top:358px;width:57px;height:27px;background:#ffa500"></div>
<div class="c" style="left:480px;width:50px;top:359px;height:27px;font-size:13px;font-weight:normal;color:#000;letter-spacing:0px">34</div>
<div class="c" style="left:15px;width:41px;top:387px;height:27px;font-size:13px;font-weight:normal;color:#000;letter-spacing:0px">10:4...</div>
<div class="a" style="left:57px;top:386px;width:100px;height:27px;background:#ec8080"></div>
<div class="c" style="left:65px;width:92px;top:387px;height:27px;font-size:13px;font-weight:normal;color:#fff;letter-spacing:0px">-00:02:29</div>
<div class="c" style="left:211px;width:111px;top:387px;height:27px;font-size:12px;font-weight:normal;color:#000;letter-spacing:0px">АВТОСАЛОН МЕ...</div>
<div class="a" style="left:323px;top:386px;width:29px;height:27px;background:#ffff00"></div>
<div class="a" style="left:473px;top:386px;width:57px;height:27px;background:#008000"></div>
<div class="c" style="left:480px;width:50px;top:387px;height:27px;font-size:13px;font-weight:normal;color:#fff;letter-spacing:0px">34</div>
<div class="c" style="left:15px;width:41px;top:415px;height:27px;font-size:13px;font-weight:normal;color:#000;letter-spacing:0px">10:3...</div>
<div class="a" style="left:57px;top:414px;width:100px;height:27px;background:#008000"></div>
<div class="c" style="left:65px;width:92px;top:415px;height:27px;font-size:13px;font-weight:normal;color:#fff;letter-spacing:0px">-00:03:29</div>
<div class="a" style="left:158px;top:414px;width:44px;height:27px;background:#008000"></div>
<div class="c" style="left:158px;width:40px;text-align:right;top:415px;height:27px;font-size:13.5px;font-weight:bold;color:#fff;letter-spacing:0.7px">1240</div>
<div class="c" style="left:211px;width:111px;top:415px;height:27px;font-size:12px;font-weight:normal;color:#000;letter-spacing:0px">Гоголевская ул.,...</div>
<div class="a" style="left:473px;top:414px;width:57px;height:27px;background:#008000"></div>
<div class="c" style="left:539px;width:41px;top:415px;height:27px;font-size:13px;font-weight:normal;color:#000;letter-spacing:0px">10:3...</div>
<div class="a" style="left:581px;top:414px;width:49px;height:27px;background:#ec8080"></div>
<div class="c" style="left:589px;width:41px;top:415px;height:27px;font-size:13px;font-weight:normal;color:#fff;letter-spacing:0px">00</div>
<div class="c" style="left:15px;width:41px;top:443px;height:27px;font-size:13px;font-weight:normal;color:#000;letter-spacing:0px">10:3...</div>
<div class="a" style="left:57px;top:442px;width:100px;height:27px;background:#ec8080"></div>
<div class="c" style="left:65px;width:92px;top:443px;height:27px;font-size:13px;font-weight:normal;color:#fff;letter-spacing:0px">-00:03:31</div>
<div class="a" style="left:158px;top:442px;width:44px;height:27px;background:#008000"></div>
<div class="c" style="left:166px;width:38px;top:443px;height:27px;font-size:13.5px;font-weight:bold;color:#fff;letter-spacing:0.7px">725</div>
<div class="c" style="left:211px;width:111px;top:443px;height:27px;font-size:12px;font-weight:normal;color:#000;letter-spacing:0px">Салютная ул., 2</div>
<div class="c" style="left:539px;width:41px;top:443px;height:27px;font-size:13px;font-weight:normal;color:#000;letter-spacing:0px">10:4...</div>
<div class="c" style="left:15px;width:41px;top:471px;height:27px;font-size:13px;font-weight:normal;color:#000;letter-spacing:0px">10:3...</div>
<div class="a" style="left:57px;top:470px;width:100px;height:27px;background:#ec8080"></div>
<div class="c" style="left:65px;width:92px;top:471px;height:27px;font-size:13px;font-weight:normal;color:#fff;letter-spacing:0px">-00:04:29</div>
<div class="a" style="left:158px;top:470px;width:44px;height:27px;background:#008000"></div>
<div class="c" style="left:166px;width:38px;top:471px;height:27px;font-size:13.5px;font-weight:bold;color:#fff;letter-spacing:0.7px">777</div>
<div class="c" style="left:211px;width:111px;top:471px;height:27px;font-size:12px;font-weight:normal;color:#000;letter-spacing:0px">Михаила Максим...</div>
<div class="a" style="left:473px;top:470px;width:57px;height:27px;background:#ffa500"></div>
<div class="c" style="left:480px;width:50px;top:471px;height:27px;font-size:13px;font-weight:normal;color:#000;letter-spacing:0px">34</div>
<div class="c" style="left:15px;width:41px;top:499px;height:27px;font-size:13px;font-weight:normal;color:#000;letter-spacing:0px">10:3...</div>
<div class="a" style="left:57px;top:498px;width:100px;height:27px;background:#008000"></div>
<div class="c" style="left:65px;width:92px;top:499px;height:27px;font-size:13px;font-weight:normal;color:#fff;letter-spacing:0px">-00:05:30</div>
<div class="a" style="left:158px;top:498px;width:44px;height:27px;background:#008000"></div>
<div class="c" style="left:158px;width:40px;text-align:right;top:499px;height:27px;font-size:13.5px;font-weight:bold;color:#fff;letter-spacing:0.7px">1239</div>
<div class="c" style="left:211px;width:111px;top:499px;height:27px;font-size:12px;font-weight:normal;color:#000;letter-spacing:0px">Григория Сково...</div>
<div class="a" style="left:473px;top:498px;width:57px;height:27px;background:#008000"></div>
<div class="c" style="left:539px;width:41px;top:499px;height:27px;font-size:13px;font-weight:normal;color:#000;letter-spacing:0px">10:3...</div>
<div class="a" style="left:581px;top:498px;width:49px;height:27px;background:#ec8080"></div>
<div class="c" style="left:589px;width:41px;top:499px;height:27px;font-size:13px;font-weight:normal;color:#fff;letter-spacing:0px">00</div>
<div class="c" style="left:15px;width:41px;top:527px;height:27px;font-size:13px;font-weight:normal;color:#000;letter-spacing:0px">10:3...</div>
<div class="a" style="left:57px;top:526px;width:100px;height:27px;background:#008000"></div>
<div class="c" style="left:65px;width:92px;top:527px;height:27px;font-size:13px;font-weight:normal;color:#fff;letter-spacing:0px">-00:06:30</div>
<div class="a" style="left:158px;top:526px;width:44px;height:27px;background:#008000"></div>
<div class="c" style="left:166px;width:38px;top:527px;height:27px;font-size:13.5px;font-weight:bold;color:#fff;letter-spacing:0.7px">93</div>
<div class="c" style="left:211px;width:111px;top:527px;height:27px;font-size:12px;font-weight:normal;color:#000;letter-spacing:0px">Северная ул. (О...</div>
<div class="c" style="left:361px;width:21px;top:527px;height:27px;font-size:13px;font-weight:normal;color:#000;letter-spacing:0px">3</div>
<div class="a" style="left:473px;top:526px;width:57px;height:27px;background:#008000"></div>
<div class="c" style="left:539px;width:41px;top:527px;height:27px;font-size:13px;font-weight:normal;color:#000;letter-spacing:0px">10:3...</div>
<div class="a" style="left:581px;top:526px;width:49px;height:27px;background:#ec8080"></div>
<div class="c" style="left:589px;width:41px;top:527px;height:27px;font-size:13px;font-weight:normal;color:#fff;letter-spacing:0px">00</div>
<div class="c" style="left:15px;width:41px;top:555px;height:27px;font-size:13px;font-weight:normal;color:#000;letter-spacing:0px">10:3...</div>
<div class="a" style="left:57px;top:554px;width:100px;height:27px;background:#008000"></div>
<div class="c" style="left:65px;width:92px;top:555px;height:27px;font-size:13px;font-weight:normal;color:#fff;letter-spacing:0px">-00:06:33</div>
<div class="a" style="left:158px;top:554px;width:44px;height:27px;background:#008000"></div>
<div class="c" style="left:166px;width:38px;top:555px;height:27px;font-size:13.5px;font-weight:bold;color:#fff;letter-spacing:0.7px">783</div>
<div class="c" style="left:211px;width:111px;top:555px;height:27px;font-size:12px;font-weight:normal;color:#000;letter-spacing:0px">БЦ СЕНАТОР (М...</div>
<div class="a" style="left:473px;top:554px;width:57px;height:27px;background:#008000"></div>
<div class="c" style="left:539px;width:41px;top:555px;height:27px;font-size:13px;font-weight:normal;color:#000;letter-spacing:0px">10:3...</div>
<div class="a" style="left:581px;top:554px;width:49px;height:27px;background:#ec8080"></div>
<div class="c" style="left:589px;width:41px;top:555px;height:27px;font-size:13px;font-weight:normal;color:#fff;letter-spacing:0px">00</div>
<div class="c" style="left:15px;width:41px;top:583px;height:27px;font-size:13px;font-weight:normal;color:#000;letter-spacing:0px">10:3...</div>
<div class="a" style="left:57px;top:582px;width:100px;height:27px;background:#008000"></div>
<div class="c" style="left:65px;width:92px;top:583px;height:27px;font-size:13px;font-weight:normal;color:#fff;letter-spacing:0px">-00:07:33</div>
<div class="a" style="left:158px;top:582px;width:44px;height:27px;background:#008000"></div>
<div class="c" style="left:158px;width:40px;text-align:right;top:583px;height:27px;font-size:13.5px;font-weight:bold;color:#fff;letter-spacing:0.7px">1105</div>
<div class="c" style="left:211px;width:111px;top:583px;height:27px;font-size:12px;font-weight:normal;color:#000;letter-spacing:0px">ТЦ ГУЛЛИВЕР (С...</div>
<div class="a" style="left:473px;top:582px;width:57px;height:27px;background:#008000"></div>
<div class="c" style="left:539px;width:41px;top:583px;height:27px;font-size:13px;font-weight:normal;color:#000;letter-spacing:0px">10:3...</div>
<div class="a" style="left:581px;top:582px;width:49px;height:27px;background:#ec8080"></div>
<div class="c" style="left:589px;width:41px;top:583px;height:27px;font-size:13px;font-weight:normal;color:#fff;letter-spacing:0px">00</div>
<div class="c" style="left:15px;width:41px;top:611px;height:27px;font-size:13px;font-weight:normal;color:#000;letter-spacing:0px">10:3...</div>
<div class="a" style="left:57px;top:610px;width:100px;height:27px;background:#008000"></div>
<div class="c" style="left:65px;width:92px;top:611px;height:27px;font-size:13px;font-weight:normal;color:#fff;letter-spacing:0px">-00:07:33</div>
<div class="a" style="left:158px;top:610px;width:44px;height:27px;background:#008000"></div>
<div class="c" style="left:158px;width:40px;text-align:right;top:611px;height:27px;font-size:13.5px;font-weight:bold;color:#fff;letter-spacing:0.7px">1082</div>
<div class="c" style="left:211px;width:111px;top:611px;height:27px;font-size:12px;font-weight:normal;color:#000;letter-spacing:0px">Рылеева ул., 10</div>
<div class="a" style="left:473px;top:610px;width:57px;height:27px;background:#008000"></div>
<div class="c" style="left:539px;width:41px;top:611px;height:27px;font-size:13px;font-weight:normal;color:#000;letter-spacing:0px">10:3...</div>
<div class="a" style="left:581px;top:610px;width:49px;height:27px;background:#ec8080"></div>
<div class="c" style="left:589px;width:41px;top:611px;height:27px;font-size:13px;font-weight:normal;color:#fff;letter-spacing:0px">00</div>
<div class="c" style="left:15px;width:41px;top:639px;height:27px;font-size:13px;font-weight:normal;color:#000;letter-spacing:0px">10:3...</div>
<div class="a" style="left:57px;top:638px;width:100px;height:27px;background:#ec8080"></div>
<div class="c" style="left:65px;width:92px;top:639px;height:27px;font-size:13px;font-weight:normal;color:#fff;letter-spacing:0px">-00:07:34</div>
<div class="a" style="left:158px;top:638px;width:44px;height:27px;background:#008000"></div>
<div class="c" style="left:158px;width:40px;text-align:right;top:639px;height:27px;font-size:13.5px;font-weight:bold;color:#fff;letter-spacing:0.7px">1238</div>
<div class="c" style="left:211px;width:111px;top:639px;height:27px;font-size:12px;font-weight:normal;color:#000;letter-spacing:0px">Соломенская ул...</div>
<div class="c" style="left:15px;width:41px;top:667px;height:27px;font-size:13px;font-weight:normal;color:#000;letter-spacing:0px">10:3...</div>
<div class="a" style="left:57px;top:666px;width:100px;height:27px;background:#008000"></div>
<div class="c" style="left:65px;width:92px;top:667px;height:27px;font-size:13px;font-weight:normal;color:#fff;letter-spacing:0px">-00:08:29</div>
<div class="a" style="left:158px;top:666px;width:44px;height:27px;background:#008000"></div>
<div class="c" style="left:158px;width:40px;text-align:right;top:667px;height:27px;font-size:13.5px;font-weight:bold;color:#fff;letter-spacing:0.7px">1058</div>
<div class="c" style="left:211px;width:111px;top:667px;height:27px;font-size:12px;font-weight:normal;color:#000;letter-spacing:0px">АВТОСАЛОН АВ...</div>
<div class="a" style="left:473px;top:666px;width:57px;height:27px;background:#008000"></div>
<div class="c" style="left:539px;width:41px;top:667px;height:27px;font-size:13px;font-weight:normal;color:#000;letter-spacing:0px">10:3...</div>
<div class="a" style="left:581px;top:666px;width:49px;height:27px;background:#ec8080"></div>
<div class="c" style="left:589px;width:41px;top:667px;height:27px;font-size:13px;font-weight:normal;color:#fff;letter-spacing:0px">00</div>
<div class="c" style="left:15px;width:41px;top:695px;height:27px;font-size:13px;font-weight:normal;color:#000;letter-spacing:0px">10:3...</div>
<div class="a" style="left:57px;top:694px;width:100px;height:27px;background:#ec8080"></div>
<div class="c" style="left:65px;width:92px;top:695px;height:27px;font-size:13px;font-weight:normal;color:#fff;letter-spacing:0px">-00:11:33</div>
<div class="a" style="left:158px;top:694px;width:44px;height:27px;background:#008000"></div>
<div class="c" style="left:158px;width:40px;text-align:right;top:695px;height:27px;font-size:13.5px;font-weight:bold;color:#fff;letter-spacing:0.7px">1231</div>
<div class="c" style="left:211px;width:111px;top:695px;height:27px;font-size:12px;font-weight:normal;color:#000;letter-spacing:0px">БОЛЬНИЦА ИНС...</div>
<div class="c" style="left:539px;width:41px;top:695px;height:27px;font-size:13px;font-weight:normal;color:#000;letter-spacing:0px">10:2...</div>
<div class="a" style="left:56px;top:134px;width:1px;height:588px;background:#f0f0f0;opacity:0.9"></div>
<div class="a" style="left:157px;top:134px;width:1px;height:588px;background:#f0f0f0;opacity:0.9"></div>
<div class="a" style="left:202px;top:134px;width:1px;height:588px;background:#f0f0f0;opacity:0.9"></div>
<div class="a" style="left:322px;top:134px;width:1px;height:588px;background:#f0f0f0;opacity:0.9"></div>
<div class="a" style="left:352px;top:134px;width:1px;height:588px;background:#f0f0f0;opacity:0.9"></div>
<div class="a" style="left:382px;top:134px;width:1px;height:588px;background:#f0f0f0;opacity:0.9"></div>
<div class="a" style="left:472px;top:134px;width:1px;height:588px;background:#f0f0f0;opacity:0.9"></div>
<div class="a" style="left:530px;top:134px;width:1px;height:588px;background:#f0f0f0;opacity:0.9"></div>
<div class="a" style="left:580px;top:134px;width:1px;height:588px;background:#f0f0f0;opacity:0.9"></div>
<div class="a" style="left:630px;top:134px;width:1px;height:588px;background:#f0f0f0;opacity:0.9"></div>
<div class="a" style="left:750px;top:134px;width:1px;height:588px;background:#f0f0f0;opacity:0.9"></div>
<div class="a" style="left:825px;top:134px;width:1px;height:588px;background:#f0f0f0;opacity:0.9"></div>
<div class="a" style="left:905px;top:134px;width:1px;height:588px;background:#f0f0f0;opacity:0.9"></div>
<div class="a" style="left:955px;top:134px;width:1px;height:588px;background:#f0f0f0;opacity:0.9"></div>
<div class="a" style="left:1005px;top:134px;width:1px;height:588px;background:#f0f0f0;opacity:0.9"></div>
<div class="a" style="left:1055px;top:134px;width:1px;height:588px;background:#f0f0f0;opacity:0.9"></div>
<div class="a" style="left:1105px;top:134px;width:1px;height:588px;background:#f0f0f0;opacity:0.9"></div>
<div class="a" style="left:385px;top:133px;width:86px;height:30px;background:#ffffff;filter:blur(1.5px)"></div>
<div class="a" style="left:393px;top:143px;width:38px;height:12px;background:#707070;filter:blur(3px)"></div>
<div class="a" style="left:437px;top:143px;width:13px;height:12px;background:#848484;filter:blur(3px)"></div>
<div class="a" style="left:450px;top:148px;width:14px;height:6px;background:#a4a4a4;filter:blur(2.2px)"></div>
<div class="a" style="left:385px;top:161px;width:86px;height:30px;background:#ffffff;filter:blur(1.5px)"></div>
<div class="a" style="left:393px;top:171px;width:38px;height:12px;background:#707070;filter:blur(3px)"></div>
<div class="a" style="left:437px;top:171px;width:13px;height:12px;background:#848484;filter:blur(3px)"></div>
<div class="a" style="left:450px;top:176px;width:14px;height:6px;background:#a4a4a4;filter:blur(2.2px)"></div>
<div class="a" style="left:385px;top:189px;width:86px;height:30px;background:#ffffff;filter:blur(1.5px)"></div>
<div class="a" style="left:393px;top:199px;width:38px;height:12px;background:#707070;filter:blur(3px)"></div>
<div class="a" style="left:437px;top:199px;width:13px;height:12px;background:#848484;filter:blur(3px)"></div>
<div class="a" style="left:450px;top:204px;width:14px;height:6px;background:#a4a4a4;filter:blur(2.2px)"></div>
<div class="a" style="left:385px;top:217px;width:86px;height:30px;background:#ffffff;filter:blur(1.5px)"></div>
<div class="a" style="left:393px;top:227px;width:38px;height:12px;background:#707070;filter:blur(3px)"></div>
<div class="a" style="left:437px;top:227px;width:13px;height:12px;background:#848484;filter:blur(3px)"></div>
<div class="a" style="left:450px;top:232px;width:14px;height:6px;background:#a4a4a4;filter:blur(2.2px)"></div>
<div class="a" style="left:385px;top:245px;width:86px;height:30px;background:#ffffff;filter:blur(1.5px)"></div>
<div class="a" style="left:393px;top:255px;width:38px;height:12px;background:#707070;filter:blur(3px)"></div>
<div class="a" style="left:437px;top:255px;width:13px;height:12px;background:#848484;filter:blur(3px)"></div>
<div class="a" style="left:450px;top:260px;width:14px;height:6px;background:#a4a4a4;filter:blur(2.2px)"></div>
<div class="a" style="left:385px;top:273px;width:86px;height:30px;background:#ffb6c1;filter:blur(1.5px)"></div>
<div class="a" style="left:393px;top:283px;width:38px;height:12px;background:#707070;filter:blur(3px)"></div>
<div class="a" style="left:437px;top:283px;width:13px;height:12px;background:#848484;filter:blur(3px)"></div>
<div class="a" style="left:450px;top:288px;width:14px;height:6px;background:#a4a4a4;filter:blur(2.2px)"></div>
<div class="a" style="left:385px;top:301px;width:86px;height:30px;background:#ffb6c1;filter:blur(1.5px)"></div>
<div class="a" style="left:393px;top:311px;width:38px;height:12px;background:#707070;filter:blur(3px)"></div>
<div class="a" style="left:437px;top:311px;width:13px;height:12px;background:#848484;filter:blur(3px)"></div>
<div class="a" style="left:450px;top:316px;width:14px;height:6px;background:#a4a4a4;filter:blur(2.2px)"></div>
<div class="a" style="left:385px;top:329px;width:86px;height:30px;background:#ffffff;filter:blur(1.5px)"></div>
<div class="a" style="left:393px;top:339px;width:38px;height:12px;background:#707070;filter:blur(3px)"></div>
<div class="a" style="left:437px;top:339px;width:13px;height:12px;background:#848484;filter:blur(3px)"></div>
<div class="a" style="left:450px;top:344px;width:14px;height:6px;background:#a4a4a4;filter:blur(2.2px)"></div>
<div class="a" style="left:385px;top:357px;width:86px;height:30px;background:#ffffff;filter:blur(1.5px)"></div>
<div class="a" style="left:393px;top:367px;width:38px;height:12px;background:#707070;filter:blur(3px)"></div>
<div class="a" style="left:437px;top:367px;width:13px;height:12px;background:#848484;filter:blur(3px)"></div>
<div class="a" style="left:450px;top:372px;width:14px;height:6px;background:#a4a4a4;filter:blur(2.2px)"></div>
<div class="a" style="left:385px;top:385px;width:86px;height:30px;background:#ffb6c1;filter:blur(1.5px)"></div>
<div class="a" style="left:393px;top:395px;width:38px;height:12px;background:#707070;filter:blur(3px)"></div>
<div class="a" style="left:437px;top:395px;width:13px;height:12px;background:#848484;filter:blur(3px)"></div>
<div class="a" style="left:450px;top:400px;width:14px;height:6px;background:#a4a4a4;filter:blur(2.2px)"></div>
<div class="a" style="left:385px;top:413px;width:86px;height:30px;background:#ffffff;filter:blur(1.5px)"></div>
<div class="a" style="left:393px;top:423px;width:38px;height:12px;background:#707070;filter:blur(3px)"></div>
<div class="a" style="left:437px;top:423px;width:13px;height:12px;background:#848484;filter:blur(3px)"></div>
<div class="a" style="left:450px;top:428px;width:14px;height:6px;background:#a4a4a4;filter:blur(2.2px)"></div>
<div class="a" style="left:385px;top:441px;width:86px;height:30px;background:#ffffff;filter:blur(1.5px)"></div>
<div class="a" style="left:393px;top:451px;width:38px;height:12px;background:#707070;filter:blur(3px)"></div>
<div class="a" style="left:437px;top:451px;width:13px;height:12px;background:#848484;filter:blur(3px)"></div>
<div class="a" style="left:450px;top:456px;width:14px;height:6px;background:#a4a4a4;filter:blur(2.2px)"></div>
<div class="a" style="left:385px;top:469px;width:86px;height:30px;background:#ffff00;filter:blur(1.5px)"></div>
<div class="a" style="left:393px;top:479px;width:38px;height:12px;background:#707070;filter:blur(3px)"></div>
<div class="a" style="left:437px;top:479px;width:13px;height:12px;background:#848484;filter:blur(3px)"></div>
<div class="a" style="left:450px;top:484px;width:14px;height:6px;background:#a4a4a4;filter:blur(2.2px)"></div>
<div class="a" style="left:385px;top:497px;width:86px;height:30px;background:#ffff00;filter:blur(1.5px)"></div>
<div class="a" style="left:393px;top:507px;width:38px;height:12px;background:#707070;filter:blur(3px)"></div>
<div class="a" style="left:437px;top:507px;width:13px;height:12px;background:#848484;filter:blur(3px)"></div>
<div class="a" style="left:450px;top:512px;width:14px;height:6px;background:#a4a4a4;filter:blur(2.2px)"></div>
<div class="a" style="left:385px;top:525px;width:86px;height:30px;background:#ffff00;filter:blur(1.5px)"></div>
<div class="a" style="left:393px;top:535px;width:38px;height:12px;background:#707070;filter:blur(3px)"></div>
<div class="a" style="left:437px;top:535px;width:13px;height:12px;background:#848484;filter:blur(3px)"></div>
<div class="a" style="left:450px;top:540px;width:14px;height:6px;background:#a4a4a4;filter:blur(2.2px)"></div>
<div class="a" style="left:385px;top:553px;width:86px;height:30px;background:#ffff00;filter:blur(1.5px)"></div>
<div class="a" style="left:393px;top:563px;width:38px;height:12px;background:#707070;filter:blur(3px)"></div>
<div class="a" style="left:437px;top:563px;width:13px;height:12px;background:#848484;filter:blur(3px)"></div>
<div class="a" style="left:450px;top:568px;width:14px;height:6px;background:#a4a4a4;filter:blur(2.2px)"></div>
<div class="a" style="left:385px;top:581px;width:86px;height:30px;background:#ffff00;filter:blur(1.5px)"></div>
<div class="a" style="left:393px;top:591px;width:38px;height:12px;background:#707070;filter:blur(3px)"></div>
<div class="a" style="left:437px;top:591px;width:13px;height:12px;background:#848484;filter:blur(3px)"></div>
<div class="a" style="left:450px;top:596px;width:14px;height:6px;background:#a4a4a4;filter:blur(2.2px)"></div>
<div class="a" style="left:385px;top:609px;width:86px;height:30px;background:#ffffff;filter:blur(1.5px)"></div>
<div class="a" style="left:393px;top:619px;width:38px;height:12px;background:#707070;filter:blur(3px)"></div>
<div class="a" style="left:437px;top:619px;width:13px;height:12px;background:#848484;filter:blur(3px)"></div>
<div class="a" style="left:450px;top:624px;width:14px;height:6px;background:#a4a4a4;filter:blur(2.2px)"></div>
<div class="a" style="left:385px;top:637px;width:86px;height:30px;background:#ffffff;filter:blur(1.5px)"></div>
<div class="a" style="left:393px;top:647px;width:38px;height:12px;background:#707070;filter:blur(3px)"></div>
<div class="a" style="left:437px;top:647px;width:13px;height:12px;background:#848484;filter:blur(3px)"></div>
<div class="a" style="left:450px;top:652px;width:14px;height:6px;background:#a4a4a4;filter:blur(2.2px)"></div>
<div class="a" style="left:385px;top:665px;width:86px;height:30px;background:#ffffff;filter:blur(1.5px)"></div>
<div class="a" style="left:393px;top:675px;width:38px;height:12px;background:#707070;filter:blur(3px)"></div>
<div class="a" style="left:437px;top:675px;width:13px;height:12px;background:#848484;filter:blur(3px)"></div>
<div class="a" style="left:450px;top:680px;width:14px;height:6px;background:#a4a4a4;filter:blur(2.2px)"></div>
<div class="a" style="left:385px;top:693px;width:86px;height:30px;background:#ffffff;filter:blur(1.5px)"></div>
<div class="a" style="left:393px;top:703px;width:38px;height:12px;background:#707070;filter:blur(3px)"></div>
<div class="a" style="left:437px;top:703px;width:13px;height:12px;background:#848484;filter:blur(3px)"></div>
<div class="a" style="left:450px;top:708px;width:14px;height:6px;background:#a4a4a4;filter:blur(2.2px)"></div>
<div class="a" style="left:1203px;top:134px;width:17px;height:588px;background:#f0f0f0"></div>
<div class="a" style="left:1204px;top:151px;width:15px;height:571px;background:#cdcdcd"></div>
<svg class="a" style="left:1206px;top:139px" width="11" height="8" viewBox="0 0 11 8"><path d="M1.5 6 L5.5 2 L9.5 6" fill="none" stroke="#505050" stroke-width="2"/></svg>
<div class="a" style="left:6px;top:722px;width:1197px;height:18px;background:#f0f0f0"></div>
<div class="a" style="left:24px;top:723px;width:1179px;height:15px;background:#cdcdcd"></div>
<svg class="a" style="left:11px;top:726px" width="8" height="11" viewBox="0 0 8 11"><path d="M6 1.5 L2 5.5 L6 9.5" fill="none" stroke="#505050" stroke-width="2"/></svg>
<div class="a" style="left:0px;top:741px;width:1225px;height:4px;background:#f7f7f7"></div>
<div class="a" style="left:0px;top:745px;width:1225px;height:1px;background:#a0a0a0"></div>
<div class="a" style="left:0px;top:746px;width:1225px;height:27px;background:linear-gradient(#fbfdff 0%,#e9f2fc 30%,#c9ddf5 65%,#a7c7ee 100%)"></div>
<svg class="a" style="left:4px;top:754px" width="16" height="16" viewBox="0 0 16 16"><rect x="0.5" y="1.5" width="15" height="12" fill="#fff" stroke="#5a80c0"/><rect x="1" y="2" width="14" height="2" fill="#a8c4ec"/><circle cx="13" cy="13" r="3.5" fill="#30b030"/><path d="M11 13 H15 M13 11 V15" stroke="#fff" stroke-width="1.2"/></svg>
<svg class="a" style="left:27px;top:754px" width="16" height="16" viewBox="0 0 16 16"><rect x="0.5" y="1.5" width="15" height="12" fill="#fff" stroke="#5a80c0"/><rect x="1" y="2" width="14" height="2" fill="#a8c4ec"/><path d="M9 16 V12 H7 L11 8 L15 12 H13 V16 Z" fill="#30b030"/></svg>
<svg class="a" style="left:50px;top:754px" width="16" height="16" viewBox="0 0 16 16"><rect x="0.5" y="1.5" width="15" height="12" fill="#fff" stroke="#5a80c0"/><rect x="1" y="2" width="14" height="2" fill="#a8c4ec"/><path d="M4 16 L5 13 L12 6 L14 8 L7 15 Z" fill="#f0c040" stroke="#b08020" stroke-width="0.7"/></svg>
<svg class="a" style="left:73px;top:754px" width="16" height="16" viewBox="0 0 16 16"><rect x="0.5" y="1.5" width="15" height="12" fill="#fff" stroke="#5a80c0"/><rect x="1" y="2" width="14" height="2" fill="#a8c4ec"/><circle cx="13" cy="13" r="3.5" fill="#f06020"/><path d="M11 13 H15" stroke="#fff" stroke-width="1.5"/></svg>
<svg class="a" style="left:104px;top:754px" width="16" height="16" viewBox="0 0 16 16"><path d="M8 1 L16 9 H11 V16 H5 V9 H0 Z" fill="#9a9a9a"/></svg>
<svg class="a" style="left:127px;top:754px" width="16" height="16" viewBox="0 0 16 16"><path d="M5 0 H11 V7 H16 L8 16 L0 7 H5 Z" fill="#2a90e8" stroke="#1060b0" stroke-width="0.6"/></svg>
<svg class="a" style="left:158px;top:754px" width="16" height="16" viewBox="0 0 16 16"><rect x="2" y="3" width="12" height="2" fill="#b0b0b0" stroke="#808080" stroke-width="0.5"/><path d="M6 3 V1 H10 V3" fill="none" stroke="#808080"/><path d="M3 5 H13 L12 16 H4 Z" fill="#d8d8d8" stroke="#808080"/><path d="M6 7 V14 M8 7 V14 M10 7 V14" stroke="#909090"/></svg>
<div class="a" style="left:95px;top:752px;width:1px;height:18px;background:#5a6a80"></div>
<div class="a" style="left:150px;top:752px;width:1px;height:18px;background:#5a6a80"></div>
<div class="a" style="left:1px;top:772px;width:1224px;height:96px;background:#cce4f7;border:1px solid #a0a0a0;border-bottom:3px solid #a0a0a0"></div>
<div class="a" style="left:2px;top:773px;width:1222px;height:20px;background:#fff"></div>
<div class="a" style="left:33px;top:775px;width:1px;height:18px;background:#e5e5e5"></div>
<svg class="a" style="left:16px;top:783px" width="10" height="5" viewBox="0 0 10 5"><path d="M0 5 H10 L5 0 Z" fill="#a8a8a8"/></svg>
<div class="t" style="left:40px;top:776px;font-size:11.5px">Адрес</div>
<div class="a" style="left:2px;top:793px;width:1221px;height:27px;background:#79b7ec"></div>
<div class="a" style="left:3px;top:793px;width:30px;height:27px;border:1px dotted #333"></div>
<div class="a" style="left:2px;top:820px;width:1221px;height:1px;background:#111"></div>
<div class="a" style="left:2px;top:848px;width:1221px;height:1px;background:#111"></div>
<div class="a" style="left:33px;top:793px;width:1px;height:56px;background:#111"></div>
<div class="a" style="left:1122px;top:793px;width:1px;height:56px;background:#111"></div>
<div class="c" style="left:13px;top:793px;height:27px;font-size:12px;color:#fff">1</div>
<div class="c" style="left:42px;top:793px;height:27px;font-size:12.2px;color:#fff">ЖД ЦЕНТРАЛЬНЫЙ (Вокзальная пл., 1)</div>
<div class="c" style="left:1132px;top:793px;height:27px;font-size:12px;color:#fff">.ЖД Вокзал</div>
<div class="c" style="left:11px;top:821px;height:27px;font-size:12px">2</div>
<div class="c" style="left:42px;top:821px;height:27px;font-size:12.4px">Попельнянская ул., 20</div>
<div class="c" style="left:1131px;top:821px;height:27px;font-size:12px">Відрадний</div>
<div class="a" style="left:0px;top:868px;width:1225px;height:110px;background:#a8c8ee;border-top:1px solid #98b8de"></div>
<div class="a" style="left:0px;top:977px;width:1228px;height:2px;background:#a0a0a0"></div>
<div class="t" style="left:6px;top:875px;font-size:11px;">Время создания</div>
<div class="t" style="left:107px;top:875px;font-size:11px;">15.08.2024 09:12:26</div>
<div class="t" style="left:227px;top:875px;font-size:11px;">Время подачи</div>
<div class="t" style="left:328px;top:875px;font-size:11px;">15.08.2024 09:22</div>
<div class="t" style="left:448px;top:875px;font-size:11px;">Время выполнения</div>
<div class="t" style="left:563px;top:875px;font-size:11px;">00:20:00</div>
<div class="t" style="left:6px;top:894px;font-size:11px;">Машина</div>
<div class="t" style="left:143px;top:894px;font-size:11px;font-weight:bold">Ford Fusion</div>
<div class="t" style="left:6px;top:913px;font-size:11px;">Заметки для водителя</div>
<div class="t" style="left:143px;top:913px;font-size:11px;font-weight:bold">набр</div>
<div class="t" style="left:6px;top:933px;font-size:11px;">Длина маршрута</div>
<div class="t" style="left:119px;top:933px;font-size:11px;">7,992</div>
<div class="t" style="left:227px;top:933px;font-size:11px;">в т.ч. загород</div>
<div class="t" style="left:327px;top:933px;font-size:11px;">0,000</div>
<div class="t" style="left:448px;top:933px;font-size:11px;">Время простоев</div>
<div class="t" style="left:563px;top:933px;font-size:11px;">00:00:00</div>
<div class="t" style="left:227px;top:957px;font-size:11px;">Доп. стоимость</div>
<div class="t" style="left:327px;top:957px;font-size:11px;">0,00</div>
<div class="a" style="left:210px;top:895px;width:196px;height:13px;filter:blur(2.4px)"><div class="a" style="left:2px;top:2px;width:40px;height:9px;background:#6a7a90;opacity:0.75"></div><div class="a" style="left:46px;top:2px;width:26px;height:9px;background:#6a7a90;opacity:0.7"></div><div class="a" style="left:76px;top:2px;width:116px;height:9px;background:#6a7a90;opacity:0.72"></div></div>
<div class="t" style="left:7px;top:952px;font-size:16.5px;line-height:20px">Цена</div>
<div class="t" style="left:59px;top:949px;font-size:22px;font-weight:bold;color:#f00;line-height:24px;letter-spacing:0.8px">278</div>
<div class="a" style="left:410px;top:929px;width:19px;height:17px;background:#e1e1e1;border:1px solid #adadad"></div>
<div class="t" style="left:414px;top:931px;font-size:11px">...</div>
<div class="a" style="left:632px;top:929px;width:19px;height:17px;background:#e1e1e1;border:1px solid #adadad"></div>
<div class="t" style="left:636px;top:931px;font-size:11px">...</div>
<div class="a" style="left:189px;top:955px;width:19px;height:17px;background:#e1e1e1;border:1px solid #adadad"></div>
<div class="t" style="left:193px;top:957px;font-size:11px">...</div>
<div class="a" style="left:410px;top:955px;width:19px;height:17px;background:#e1e1e1;border:1px solid #adadad"></div>
<div class="t" style="left:414px;top:957px;font-size:11px">...</div>
<div class="a" style="left:15px;top:990px;width:1815px;height:2px;background:#7a7a7a"></div>
<div class="a" style="left:1225px;top:64px;width:3px;height:914px;background:#a0a0a0"></div>
<div class="a" style="left:1228px;top:64px;width:3px;height:914px;background:#b4d0f0"></div>
<div class="a" style="left:1231px;top:64px;width:652px;height:926px;background:#f0f0f0"></div>
<div class="a" style="left:1234px;top:68px;width:54px;height:24px;background:#f0f0f0;border:1px solid #d9d9d9;border-bottom:none;border-right:2px solid #8a8a8a"></div>
<div class="t" style="left:1238px;top:74px;font-size:11px">Сектора</div>
<div class="a" style="left:1288px;top:68px;width:43px;height:24px;background:#f0f0f0;border:1px solid #d9d9d9;border-bottom:none;border-right:2px solid #8a8a8a"></div>
<div class="t" style="left:1292px;top:74px;font-size:11px">Карта</div>
<div class="a" style="left:1331px;top:68px;width:84px;height:24px;background:#f0f0f0;border:1px solid #d9d9d9;border-bottom:none;border-right:2px solid #8a8a8a"></div>
<div class="t" style="left:1335px;top:74px;font-size:11px">Сообщения(0)</div>
<div class="a" style="left:1415px;top:66px;width:63px;height:27px;background:#fff;border:1px solid #d9d9d9;border-bottom:none;border-right:2px solid #8a8a8a"></div>
<div class="t" style="left:1421px;top:73px;font-size:11px">Водители</div>
<div class="a" style="left:1233px;top:92px;width:650px;height:1px;background:#d9d9d9"></div>
<div class="a" style="left:1233px;top:93px;width:650px;height:1px;background:#fff"></div>
<div class="a" style="left:1235px;top:94px;width:648px;height:23px;background:linear-gradient(#fbfdff 0%,#e9f2fc 30%,#c9ddf5 65%,#a7c7ee 100%)"></div>
<svg class="a" style="left:1239px;top:98px" width="16" height="16" viewBox="0 0 16 16"><rect x="0.5" y="0.5" width="15" height="15" rx="2" fill="#a8a8a8" stroke="#c8c8c8"/><path d="M3 8 H5 V14 H3 Z M6 8 L8 3 Q10 3 9 7 H13 V14 H6 Z" fill="#e0e0e0"/></svg>
<svg class="a" style="left:1262px;top:98px" width="16" height="16" viewBox="0 0 16 16"><rect x="0" y="0" width="16" height="16" rx="2" fill="#e81818"/><path d="M3 2 H5 V8 H3 Z M6 2 H13 V9 H9 Q10 13 8 14 L6 9 Z" fill="#fff"/></svg>
<div class="a" style="left:1236px;top:117px;width:647px;height:857px;background:#cce6fb;border:1px solid #7a7a7a;border-right:none"></div>
<div class="a" style="left:1237px;top:118px;width:646px;height:20px;background:#fff"></div>
<div class="a" style="left:1267px;top:120px;width:1px;height:18px;background:#e5e5e5"></div>
<div class="a" style="left:1317px;top:120px;width:1px;height:18px;background:#e5e5e5"></div>
<div class="a" style="left:1789px;top:120px;width:1px;height:18px;background:#e5e5e5"></div>
<svg class="a" style="left:1249px;top:127px" width="10" height="6" viewBox="0 0 10 6"><path d="M0 0 H10 L5 5 Z" fill="#a0a0a0"/></svg>
<div class="t" style="left:1273px;top:122px;font-size:11px">Позы...</div>
<div class="t" style="left:1323px;top:122px;font-size:11px">Статус</div>
<div class="t" style="left:1796px;top:122px;font-size:11px">Название граф...</div>
<div class="a" style="left:1237px;top:165px;width:646px;height:1px;background:#e9eef3"></div>
<div class="a" style="left:1237px;top:138px;width:646px;height:27px;overflow:hidden">
<div class="a" style="left:6px;top:7px;width:13px;height:13px;background:#ecebe4;border:1px solid #c4c2b8"></div>
<svg class="a" style="left:8px;top:9px" width="9" height="9" viewBox="0 0 9 9"><path d="M1 4.5 L3.5 7 L8 2" fill="none" stroke="#a8a8a0" stroke-width="1.6"/></svg>
<div class="c" style="left:41px;top:1px;height:27px;font-size:13.5px;text-decoration:underline">9(к/...</div>
<div class="c" style="left:561px;top:1px;height:26px;font-size:11px;letter-spacing:0px">СВОБОДНЫЙ</div>
</div>
<div class="a" style="left:1237px;top:193px;width:646px;height:1px;background:#e9eef3"></div>
<div class="a" style="left:1237px;top:166px;width:646px;height:27px;overflow:hidden">
<div class="a" style="left:6px;top:7px;width:13px;height:13px;background:#ecebe4;border:1px solid #c4c2b8"></div>
<svg class="a" style="left:8px;top:9px" width="9" height="9" viewBox="0 0 9 9"><path d="M1 4.5 L3.5 7 L8 2" fill="none" stroke="#a8a8a0" stroke-width="1.6"/></svg>
<div class="c" style="left:41px;top:1px;height:27px;font-size:13.5px;text-decoration:underline">37(к...</div>
<div class="c" style="left:561px;top:1px;height:26px;font-size:11px;letter-spacing:0px">СВОБОДНЫЙ</div>
</div>
<div class="a" style="left:1318px;top:194px;width:471px;height:27px;background:#007c00"></div>
<div class="a" style="left:1237px;top:221px;width:646px;height:1px;background:#e9eef3"></div>
<div class="a" style="left:1237px;top:194px;width:646px;height:27px;overflow:hidden">
<div class="a" style="left:6px;top:7px;width:13px;height:13px;background:#ecebe4;border:1px solid #c4c2b8"></div>
<svg class="a" style="left:8px;top:9px" width="9" height="9" viewBox="0 0 9 9"><path d="M1 4.5 L3.5 7 L8 2" fill="none" stroke="#a8a8a0" stroke-width="1.6"/></svg>
<div class="c" style="left:89px;top:1px;height:27px;font-size:12px;color:#fff">На заказе</div>
<div class="c" style="left:561px;top:1px;height:26px;font-size:11px;letter-spacing:0px">СВОБОДНЫЙ</div>
</div>
<div class="a" style="left:1237px;top:249px;width:646px;height:1px;background:#e9eef3"></div>
<div class="a" style="left:1237px;top:222px;width:646px;height:27px;overflow:hidden">
<div class="a" style="left:6px;top:7px;width:13px;height:13px;background:#ecebe4;border:1px solid #c4c2b8"></div>
<svg class="a" style="left:8px;top:9px" width="9" height="9" viewBox="0 0 9 9"><path d="M1 4.5 L3.5 7 L8 2" fill="none" stroke="#a8a8a0" stroke-width="1.6"/></svg>
<div class="c" style="left:561px;top:1px;height:26px;font-size:11px;letter-spacing:0px">СВОБОДНЫЙ</div>
</div>
<div class="a" style="left:1237px;top:277px;width:646px;height:1px;background:#e9eef3"></div>
<div class="a" style="left:1237px;top:250px;width:646px;height:27px;overflow:hidden">
<div class="a" style="left:6px;top:7px;width:13px;height:13px;background:#ecebe4;border:1px solid #c4c2b8"></div>
<svg class="a" style="left:8px;top:9px" width="9" height="9" viewBox="0 0 9 9"><path d="M1 4.5 L3.5 7 L8 2" fill="none" stroke="#a8a8a0" stroke-width="1.6"/></svg>
<div class="c" style="left:561px;top:1px;height:26px;font-size:11px;letter-spacing:0px">СВОБОДНЫЙ</div>
</div>
<div class="a" style="left:1318px;top:278px;width:471px;height:27px;background:#007c00"></div>
<div class="a" style="left:1237px;top:305px;width:646px;height:1px;background:#e9eef3"></div>
<div class="a" style="left:1237px;top:278px;width:646px;height:27px;overflow:hidden">
<div class="a" style="left:6px;top:7px;width:13px;height:13px;background:#ecebe4;border:1px solid #c4c2b8"></div>
<svg class="a" style="left:8px;top:9px" width="9" height="9" viewBox="0 0 9 9"><path d="M1 4.5 L3.5 7 L8 2" fill="none" stroke="#a8a8a0" stroke-width="1.6"/></svg>
<div class="c" style="left:89px;top:1px;height:27px;font-size:12px;color:#fff">На заказе</div>
<div class="c" style="left:561px;top:1px;height:26px;font-size:11px;letter-spacing:0px">СВОБОДНЫЙ</div>
</div>
<div class="a" style="left:1237px;top:333px;width:646px;height:1px;background:#e9eef3"></div>
<div class="a" style="left:1237px;top:306px;width:646px;height:27px;overflow:hidden">
<div class="a" style="left:6px;top:7px;width:13px;height:13px;background:#ecebe4;border:1px solid #c4c2b8"></div>
<svg class="a" style="left:8px;top:9px" width="9" height="9" viewBox="0 0 9 9"><path d="M1 4.5 L3.5 7 L8 2" fill="none" stroke="#a8a8a0" stroke-width="1.6"/></svg>
<div class="c" style="left:561px;top:1px;height:26px;font-size:11px;letter-spacing:0px">СВОБОДНЫЙ</div>
</div>
<div class="a" style="left:1237px;top:361px;width:646px;height:1px;background:#e9eef3"></div>
<div class="a" style="left:1237px;top:334px;width:646px;height:27px;overflow:hidden">
<div class="a" style="left:6px;top:7px;width:13px;height:13px;background:#ecebe4;border:1px solid #c4c2b8"></div>
<svg class="a" style="left:8px;top:9px" width="9" height="9" viewBox="0 0 9 9"><path d="M1 4.5 L3.5 7 L8 2" fill="none" stroke="#a8a8a0" stroke-width="1.6"/></svg>
<div class="c" style="left:561px;top:1px;height:26px;font-size:11px;letter-spacing:0px">СВОБОДНЫЙ</div>
</div>
<div class="a" style="left:1237px;top:389px;width:646px;height:1px;background:#e9eef3"></div>
<div class="a" style="left:1237px;top:362px;width:646px;height:27px;overflow:hidden">
<div class="a" style="left:6px;top:7px;width:13px;height:13px;background:#ecebe4;border:1px solid #c4c2b8"></div>
<svg class="a" style="left:8px;top:9px" width="9" height="9" viewBox="0 0 9 9"><path d="M1 4.5 L3.5 7 L8 2" fill="none" stroke="#a8a8a0" stroke-width="1.6"/></svg>
<div class="c" style="left:561px;top:1px;height:26px;font-size:11px;letter-spacing:0px">СВОБОДНЫЙ</div>
</div>
<div class="a" style="left:1237px;top:417px;width:646px;height:1px;background:#e9eef3"></div>
<div class="a" style="left:1237px;top:390px;width:646px;height:27px;overflow:hidden">
<div class="a" style="left:6px;top:7px;width:13px;height:13px;background:#ecebe4;border:1px solid #c4c2b8"></div>
<svg class="a" style="left:8px;top:9px" width="9" height="9" viewBox="0 0 9 9"><path d="M1 4.5 L3.5 7 L8 2" fill="none" stroke="#a8a8a0" stroke-width="1.6"/></svg>
<div class="c" style="left:561px;top:1px;height:26px;font-size:11px;letter-spacing:0px">СВОБОДНЫЙ</div>
</div>
<div class="a" style="left:1237px;top:445px;width:646px;height:1px;background:#e9eef3"></div>
<div class="a" style="left:1237px;top:418px;width:646px;height:27px;overflow:hidden">
<div class="a" style="left:6px;top:7px;width:13px;height:13px;background:#ecebe4;border:1px solid #c4c2b8"></div>
<svg class="a" style="left:8px;top:9px" width="9" height="9" viewBox="0 0 9 9"><path d="M1 4.5 L3.5 7 L8 2" fill="none" stroke="#a8a8a0" stroke-width="1.6"/></svg>
<div class="c" style="left:561px;top:1px;height:26px;font-size:11px;letter-spacing:0px">СВОБОДНЫЙ</div>
</div>
<div class="a" style="left:1237px;top:473px;width:646px;height:1px;background:#e9eef3"></div>
<div class="a" style="left:1237px;top:446px;width:646px;height:27px;overflow:hidden">
<div class="a" style="left:6px;top:7px;width:13px;height:13px;background:#ecebe4;border:1px solid #c4c2b8"></div>
<svg class="a" style="left:8px;top:9px" width="9" height="9" viewBox="0 0 9 9"><path d="M1 4.5 L3.5 7 L8 2" fill="none" stroke="#a8a8a0" stroke-width="1.6"/></svg>
<div class="c" style="left:561px;top:1px;height:26px;font-size:11px;letter-spacing:0px">СВОБОДНЫЙ</div>
</div>
<div class="a" style="left:1237px;top:501px;width:646px;height:1px;background:#e9eef3"></div>
<div class="a" style="left:1237px;top:474px;width:646px;height:27px;overflow:hidden">
<div class="a" style="left:6px;top:7px;width:13px;height:13px;background:#ecebe4;border:1px solid #c4c2b8"></div>
<svg class="a" style="left:8px;top:9px" width="9" height="9" viewBox="0 0 9 9"><path d="M1 4.5 L3.5 7 L8 2" fill="none" stroke="#a8a8a0" stroke-width="1.6"/></svg>
<div class="c" style="left:561px;top:1px;height:26px;font-size:11px;letter-spacing:0px">СВОБОДНЫЙ</div>
</div>
<div class="a" style="left:1318px;top:502px;width:471px;height:27px;background:#007c00"></div>
<div class="a" style="left:1237px;top:529px;width:646px;height:1px;background:#e9eef3"></div>
<div class="a" style="left:1237px;top:502px;width:646px;height:27px;overflow:hidden">
<div class="a" style="left:6px;top:7px;width:13px;height:13px;background:#ecebe4;border:1px solid #c4c2b8"></div>
<svg class="a" style="left:8px;top:9px" width="9" height="9" viewBox="0 0 9 9"><path d="M1 4.5 L3.5 7 L8 2" fill="none" stroke="#a8a8a0" stroke-width="1.6"/></svg>
<div class="c" style="left:89px;top:1px;height:27px;font-size:12px;color:#fff">На заказе</div>
<div class="c" style="left:561px;top:1px;height:26px;font-size:11px;letter-spacing:0px">СВОБОДНЫЙ</div>
</div>
<div class="a" style="left:1318px;top:530px;width:471px;height:27px;background:#007c00"></div>
<div class="a" style="left:1237px;top:557px;width:646px;height:1px;background:#e9eef3"></div>
<div class="a" style="left:1237px;top:530px;width:646px;height:27px;overflow:hidden">
<div class="a" style="left:6px;top:7px;width:13px;height:13px;background:#ecebe4;border:1px solid #c4c2b8"></div>
<svg class="a" style="left:8px;top:9px" width="9" height="9" viewBox="0 0 9 9"><path d="M1 4.5 L3.5 7 L8 2" fill="none" stroke="#a8a8a0" stroke-width="1.6"/></svg>
<div class="c" style="left:89px;top:1px;height:27px;font-size:12px;color:#fff">На заказе</div>
<div class="c" style="left:561px;top:1px;height:26px;font-size:11px;letter-spacing:0px">СВОБОДНЫЙ</div>
</div>
<div class="a" style="left:1318px;top:558px;width:471px;height:27px;background:#007c00"></div>
<div class="a" style="left:1237px;top:585px;width:646px;height:1px;background:#e9eef3"></div>
<div class="a" style="left:1237px;top:558px;width:646px;height:27px;overflow:hidden">
<div class="a" style="left:6px;top:7px;width:13px;height:13px;background:#ecebe4;border:1px solid #c4c2b8"></div>
<svg class="a" style="left:8px;top:9px" width="9" height="9" viewBox="0 0 9 9"><path d="M1 4.5 L3.5 7 L8 2" fill="none" stroke="#a8a8a0" stroke-width="1.6"/></svg>
<div class="c" style="left:89px;top:1px;height:27px;font-size:12px;color:#fff">На заказе</div>
<div class="c" style="left:561px;top:1px;height:26px;font-size:11px;letter-spacing:0px">СВОБОДНЫЙ</div>
</div>
<div class="a" style="left:1237px;top:613px;width:646px;height:1px;background:#e9eef3"></div>
<div class="a" style="left:1237px;top:586px;width:646px;height:27px;overflow:hidden">
<div class="a" style="left:6px;top:7px;width:13px;height:13px;background:#ecebe4;border:1px solid #c4c2b8"></div>
<svg class="a" style="left:8px;top:9px" width="9" height="9" viewBox="0 0 9 9"><path d="M1 4.5 L3.5 7 L8 2" fill="none" stroke="#a8a8a0" stroke-width="1.6"/></svg>
<div class="c" style="left:561px;top:1px;height:26px;font-size:11px;letter-spacing:0px">СВОБОДНЫЙ</div>
</div>
<div class="a" style="left:1237px;top:641px;width:646px;height:1px;background:#e9eef3"></div>
<div class="a" style="left:1237px;top:614px;width:646px;height:27px;overflow:hidden">
<div class="a" style="left:6px;top:7px;width:13px;height:13px;background:#ecebe4;border:1px solid #c4c2b8"></div>
<svg class="a" style="left:8px;top:9px" width="9" height="9" viewBox="0 0 9 9"><path d="M1 4.5 L3.5 7 L8 2" fill="none" stroke="#a8a8a0" stroke-width="1.6"/></svg>
<div class="c" style="left:561px;top:1px;height:26px;font-size:11px;letter-spacing:0px">СВОБОДНЫЙ</div>
</div>
<div class="a" style="left:1237px;top:669px;width:646px;height:1px;background:#e9eef3"></div>
<div class="a" style="left:1237px;top:642px;width:646px;height:27px;overflow:hidden">
<div class="a" style="left:6px;top:7px;width:13px;height:13px;background:#ecebe4;border:1px solid #c4c2b8"></div>
<svg class="a" style="left:8px;top:9px" width="9" height="9" viewBox="0 0 9 9"><path d="M1 4.5 L3.5 7 L8 2" fill="none" stroke="#a8a8a0" stroke-width="1.6"/></svg>
<div class="c" style="left:561px;top:1px;height:26px;font-size:11px;letter-spacing:0.45px">ЗАРПЛАТА</div>
</div>
<div class="a" style="left:1237px;top:697px;width:646px;height:1px;background:#e9eef3"></div>
<div class="a" style="left:1237px;top:670px;width:646px;height:27px;overflow:hidden">
<div class="a" style="left:6px;top:7px;width:13px;height:13px;background:#ecebe4;border:1px solid #c4c2b8"></div>
<svg class="a" style="left:8px;top:9px" width="9" height="9" viewBox="0 0 9 9"><path d="M1 4.5 L3.5 7 L8 2" fill="none" stroke="#a8a8a0" stroke-width="1.6"/></svg>
<div class="c" style="left:561px;top:1px;height:26px;font-size:11px;letter-spacing:0.45px">ЗАРПЛАТА</div>
</div>
<div class="a" style="left:1318px;top:698px;width:471px;height:27px;background:#007c00"></div>
<div class="a" style="left:1237px;top:725px;width:646px;height:1px;background:#e9eef3"></div>
<div class="a" style="left:1237px;top:698px;width:646px;height:27px;overflow:hidden">
<div class="a" style="left:6px;top:7px;width:13px;height:13px;background:#ecebe4;border:1px solid #c4c2b8"></div>
<svg class="a" style="left:8px;top:9px" width="9" height="9" viewBox="0 0 9 9"><path d="M1 4.5 L3.5 7 L8 2" fill="none" stroke="#a8a8a0" stroke-width="1.6"/></svg>
<div class="c" style="left:89px;top:1px;height:27px;font-size:12px;color:#fff">На заказе</div>
<div class="c" style="left:561px;top:1px;height:26px;font-size:11px;letter-spacing:0px">СВОБОДНЫЙ</div>
</div>
<div class="a" style="left:1318px;top:726px;width:471px;height:27px;background:#007c00"></div>
<div class="a" style="left:1237px;top:753px;width:646px;height:1px;background:#e9eef3"></div>
<div class="a" style="left:1237px;top:726px;width:646px;height:27px;overflow:hidden">
<div class="a" style="left:6px;top:7px;width:13px;height:13px;background:#ecebe4;border:1px solid #c4c2b8"></div>
<svg class="a" style="left:8px;top:9px" width="9" height="9" viewBox="0 0 9 9"><path d="M1 4.5 L3.5 7 L8 2" fill="none" stroke="#a8a8a0" stroke-width="1.6"/></svg>
<div class="c" style="left:89px;top:1px;height:27px;font-size:12px;color:#fff">На заказе</div>
<div class="c" style="left:561px;top:1px;height:26px;font-size:11px;letter-spacing:0.45px">ЗАРПЛАТА</div>
</div>
<div class="a" style="left:1318px;top:754px;width:471px;height:27px;background:#007c00"></div>
<div class="a" style="left:1237px;top:781px;width:646px;height:1px;background:#e9eef3"></div>
<div class="a" style="left:1237px;top:754px;width:646px;height:27px;overflow:hidden">
<div class="a" style="left:6px;top:7px;width:13px;height:13px;background:#ecebe4;border:1px solid #c4c2b8"></div>
<svg class="a" style="left:8px;top:9px" width="9" height="9" viewBox="0 0 9 9"><path d="M1 4.5 L3.5 7 L8 2" fill="none" stroke="#a8a8a0" stroke-width="1.6"/></svg>
<div class="c" style="left:89px;top:1px;height:27px;font-size:12px;color:#fff">На заказе</div>
<div class="c" style="left:561px;top:1px;height:26px;font-size:11px;letter-spacing:0.45px">ЗАРПЛАТА</div>
</div>
<div class="a" style="left:1276px;top:782px;width:37px;height:27px;background:#f4f43c"></div>
<div class="a" style="left:1318px;top:782px;width:471px;height:27px;background:#1b4c2c"></div>
<div class="a" style="left:1237px;top:809px;width:646px;height:1px;background:#e9eef3"></div>
<div class="a" style="left:1237px;top:782px;width:646px;height:27px;overflow:hidden">
<div class="a" style="left:6px;top:7px;width:13px;height:13px;background:#ecebe4;border:1px solid #c4c2b8"></div>
<svg class="a" style="left:8px;top:9px" width="9" height="9" viewBox="0 0 9 9"><path d="M1 4.5 L3.5 7 L8 2" fill="none" stroke="#a8a8a0" stroke-width="1.6"/></svg>
<div class="c" style="left:41px;top:1px;height:27px;font-size:13.5px;text-decoration:underline">108...</div>
<div class="c" style="left:89px;top:1px;height:27px;font-size:12px;color:#fff">На заказе - Таксометр</div>
<div class="c" style="left:561px;top:1px;height:26px;font-size:11px;letter-spacing:0.45px">ЗАРПЛАТА</div>
</div>
<div class="a" style="left:1276px;top:810px;width:37px;height:27px;background:#f4f43c"></div>
<div class="a" style="left:1318px;top:810px;width:471px;height:27px;background:#007c00"></div>
<div class="a" style="left:1237px;top:837px;width:646px;height:1px;background:#e9eef3"></div>
<div class="a" style="left:1237px;top:810px;width:646px;height:27px;overflow:hidden">
<div class="a" style="left:6px;top:7px;width:13px;height:13px;background:#ecebe4;border:1px solid #c4c2b8"></div>
<svg class="a" style="left:8px;top:9px" width="9" height="9" viewBox="0 0 9 9"><path d="M1 4.5 L3.5 7 L8 2" fill="none" stroke="#a8a8a0" stroke-width="1.6"/></svg>
<div class="c" style="left:41px;top:1px;height:27px;font-size:13.5px;text-decoration:underline">110...</div>
<div class="c" style="left:89px;top:1px;height:27px;font-size:12px;color:#fff">На заказе</div>
<div class="c" style="left:561px;top:1px;height:26px;font-size:11px;letter-spacing:0.45px">ЗАРПЛАТА</div>
</div>
<div class="a" style="left:1276px;top:838px;width:37px;height:27px;background:#f4f43c"></div>
<div class="a" style="left:1318px;top:838px;width:471px;height:27px;background:#007c00"></div>
<div class="a" style="left:1237px;top:865px;width:646px;height:1px;background:#e9eef3"></div>
<div class="a" style="left:1237px;top:838px;width:646px;height:27px;overflow:hidden">
<div class="a" style="left:6px;top:7px;width:13px;height:13px;background:#ecebe4;border:1px solid #c4c2b8"></div>
<svg class="a" style="left:8px;top:9px" width="9" height="9" viewBox="0 0 9 9"><path d="M1 4.5 L3.5 7 L8 2" fill="none" stroke="#a8a8a0" stroke-width="1.6"/></svg>
<div class="c" style="left:41px;top:1px;height:27px;font-size:13.5px;text-decoration:underline">111...</div>
<div class="c" style="left:89px;top:1px;height:27px;font-size:12px;color:#fff">На заказе</div>
<div class="c" style="left:561px;top:1px;height:26px;font-size:11px;letter-spacing:0.45px">ЗАРПЛАТА</div>
</div>
<div class="a" style="left:1276px;top:866px;width:37px;height:27px;background:#2af03a"></div>
<div class="a" style="left:1318px;top:866px;width:471px;height:27px;background:#3a006c"></div>
<div class="a" style="left:1237px;top:893px;width:646px;height:1px;background:#e9eef3"></div>
<div class="a" style="left:1237px;top:866px;width:646px;height:27px;overflow:hidden">
<div class="a" style="left:6px;top:7px;width:13px;height:13px;background:#ecebe4;border:1px solid #c4c2b8"></div>
<svg class="a" style="left:8px;top:9px" width="9" height="9" viewBox="0 0 9 9"><path d="M1 4.5 L3.5 7 L8 2" fill="none" stroke="#a8a8a0" stroke-width="1.6"/></svg>
<div class="c" style="left:41px;top:1px;height:27px;font-size:13.5px;text-decoration:underline">112...</div>
<div class="c" style="left:89px;top:1px;height:27px;font-size:12px;color:#fff">Таксометр с руки</div>
<div class="c" style="left:561px;top:1px;height:26px;font-size:11px;letter-spacing:0.45px">ЗАРПЛАТА</div>
</div>
<div class="a" style="left:1276px;top:894px;width:37px;height:27px;background:#2af03a"></div>
<div class="a" style="left:1237px;top:921px;width:646px;height:1px;background:#e9eef3"></div>
<div class="a" style="left:1237px;top:894px;width:646px;height:27px;overflow:hidden">
<div class="a" style="left:6px;top:7px;width:13px;height:13px;background:#ecebe4;border:1px solid #c4c2b8"></div>
<svg class="a" style="left:8px;top:9px" width="9" height="9" viewBox="0 0 9 9"><path d="M1 4.5 L3.5 7 L8 2" fill="none" stroke="#a8a8a0" stroke-width="1.6"/></svg>
<div class="c" style="left:41px;top:1px;height:27px;font-size:13.5px;text-decoration:underline">114...</div>
<div class="c" style="left:561px;top:1px;height:26px;font-size:11px;letter-spacing:0.45px">ЗАРПЛАТА</div>
</div>
<div class="a" style="left:1276px;top:922px;width:37px;height:11px;background:#2af03a"></div>
<div class="a" style="left:1237px;top:949px;width:646px;height:1px;background:#e9eef3"></div>
<div class="a" style="left:1237px;top:922px;width:646px;height:11px;overflow:hidden">
<div class="a" style="left:6px;top:7px;width:13px;height:13px;background:#ecebe4;border:1px solid #c4c2b8"></div>
<svg class="a" style="left:8px;top:9px" width="9" height="9" viewBox="0 0 9 9"><path d="M1 4.5 L3.5 7 L8 2" fill="none" stroke="#a8a8a0" stroke-width="1.6"/></svg>
<div class="c" style="left:41px;top:1px;height:27px;font-size:13.5px;text-decoration:underline">121...</div>
<div class="c" style="left:561px;top:1px;height:26px;font-size:11px;letter-spacing:0.45px">ЗАРПЛАТА</div>
</div>
<div class="a" style="left:1267px;top:138px;width:1px;height:795px;background:#e9eef3"></div>
<div class="a" style="left:1317px;top:138px;width:1px;height:795px;background:#e9eef3"></div>
<div class="a" style="left:1789px;top:138px;width:1px;height:795px;background:#e9eef3"></div>
<div class="a" style="left:1237px;top:933px;width:646px;height:38px;background:#f0f0f0"></div>
<div class="a" style="left:1237px;top:951px;width:646px;height:1px;background:#a0a0a0"></div>
<div class="a" style="left:1267px;top:933px;width:1px;height:38px;background:#d0d0d0"></div>
<div class="t" style="left:1243px;top:935px;font-size:11px">В...</div>
<div class="t" style="left:1274px;top:935px;font-size:11px">57</div>
<div class="t" style="left:1243px;top:954px;font-size:11px">В...</div>
<div class="t" style="left:1274px;top:954px;font-size:11px">531</div>
<div class="a" style="left:1236px;top:971px;width:647px;height:1px;background:#a0a0a0"></div>
<div class="a" style="left:1237px;top:972px;width:646px;height:1px;background:#f0f0f0"></div>
<div class="a" style="left:1236px;top:973px;width:647px;height:1px;background:#8a8a8a"></div>
<div class="a" style="left:1232px;top:977px;width:651px;height:2px;background:#7a7a7a"></div>
<div class="a" style="left:1231px;top:64px;width:2px;height:913px;background:#fbfbfb"></div>
<div class="a" style="left:598px;top:197px;width:720px;height:595px;background:#f0f0f0;border:1px solid #5e5e5e"></div>
<div class="a" style="left:599px;top:198px;width:718px;height:30px;background:#fff"></div>
<svg class="a" style="left:607px;top:206px" width="16" height="12" viewBox="0 0 16 12"><path d="M5 3 Q6 1.5 9 1.5 Q13 1.5 14 3.5 L15 5 L16 6 V10 H0 V7 Q0 5 3 4.5 Z" fill="#e2be20"/><path d="M5.5 3.2 Q7 2 9.5 2 Q12.5 2 13.5 4 L13.2 5 H6.5 Z" fill="#17324e"/><circle cx="6.5" cy="1.3" r="1" fill="#f0cc30"/><circle cx="10" cy="0.8" r="1" fill="#f0cc30"/><path d="M8 6.5 H13.5 M8.8 7.5 H13" stroke="#111" stroke-dasharray="1 1" stroke-width="1"/><rect x="1.5" y="5.5" width="2.5" height="1.5" fill="#4a78a8"/><path d="M0 8.5 H7 V10.5 H0 Z" fill="#111"/><ellipse cx="6" cy="9.6" rx="1.6" ry="2.2" fill="#000"/><ellipse cx="14.7" cy="8.8" rx="1.3" ry="2" fill="#000"/></svg>
<div class="t" style="left:628px;top:206px;font-size:12px">Тарифы</div>
<svg class="a" style="left:1297px;top:207px" width="11" height="11" viewBox="0 0 11 11"><path d="M0.5 0.5 L10.5 10.5 M10.5 0.5 L0.5 10.5" stroke="#111" stroke-width="1.05"/></svg>
<div class="a" style="left:599px;top:228px;width:171px;height:532px;background:#fff;border:1px solid #828790"></div>
<div class="a" style="left:621px;top:230px;width:59px;height:16px;background:#cce8ff"></div>
<div class="t" style="left:625px;top:231px;font-size:10.7px">Основные</div>
<div class="a" style="left:614px;top:238px;width:7px;height:1px;background:repeating-linear-gradient(90deg,#8a8a8a 0 1px,transparent 1px 2px)"></div>
<div class="t" style="left:625px;top:247px;font-size:10.7px">Дополнительные</div>
<div class="a" style="left:614px;top:254px;width:7px;height:1px;background:repeating-linear-gradient(90deg,#8a8a8a 0 1px,transparent 1px 2px)"></div>
<div class="t" style="left:625px;top:263px;font-size:10.7px">Тарифная сетка</div>
<div class="a" style="left:614px;top:270px;width:7px;height:1px;background:repeating-linear-gradient(90deg,#8a8a8a 0 1px,transparent 1px 2px)"></div>
<div class="t" style="left:625px;top:279px;font-size:10.7px">Минимал</div>
<div class="a" style="left:614px;top:286px;width:7px;height:1px;background:repeating-linear-gradient(90deg,#8a8a8a 0 1px,transparent 1px 2px)"></div>
<div class="t" style="left:625px;top:295px;font-size:10.7px">Гибкие тарифы</div>
<div class="a" style="left:614px;top:302px;width:7px;height:1px;background:repeating-linear-gradient(90deg,#8a8a8a 0 1px,transparent 1px 2px)"></div>
<div class="t" style="left:625px;top:311px;font-size:10.7px">Группы секторов</div>
<div class="a" style="left:614px;top:318px;width:7px;height:1px;background:repeating-linear-gradient(90deg,#8a8a8a 0 1px,transparent 1px 2px)"></div>
<div class="t" style="left:625px;top:327px;font-size:10.7px">Тарифы по типам машин</div>
<div class="a" style="left:614px;top:334px;width:7px;height:1px;background:repeating-linear-gradient(90deg,#8a8a8a 0 1px,transparent 1px 2px)"></div>
<div class="a" style="left:613px;top:238px;width:1px;height:97px;background:repeating-linear-gradient(180deg,#8a8a8a 0 1px,transparent 1px 2px)"></div>
<div class="t" style="left:779px;top:236px;font-size:11px">Стандартный тариф</div>
<div class="a" style="left:1208px;top:231px;width:67px;height:21px;background:#fff;border:1px solid #7a7a7a"></div>
<div class="c" style="left:1212px;top:231px;height:21px;line-height:21px;font-size:11px;color:#000">16,00</div>
<div class="a" style="left:1259px;top:233px;width:14px;height:17px;background:#f4f4f4;border:1px solid #b0b0b0"></div>
<div class="a" style="left:1260px;top:241px;width:12px;height:1px;background:#b0b0b0"></div>
<svg class="a" style="left:1263px;top:236px" width="7" height="4" viewBox="0 0 7 4"><path d="M1 3.5 H6 L3.5 0.5 Z" fill="#000"/></svg>
<svg class="a" style="left:1263px;top:243px" width="7" height="4" viewBox="0 0 7 4"><path d="M1 0.5 H6 L3.5 3.5 Z" fill="#000"/></svg>
<div class="t" style="left:1281px;top:232px;font-size:11px">₴/км</div>
<div class="t" style="left:779px;top:263px;font-size:11px">Тариф на простои</div>
<div class="a" style="left:1208px;top:258px;width:67px;height:21px;background:#fff;border:1px solid #7a7a7a"></div>
<div class="c" style="left:1212px;top:258px;height:21px;line-height:21px;font-size:11px;color:#000">4,00</div>
<div class="a" style="left:1259px;top:260px;width:14px;height:17px;background:#f4f4f4;border:1px solid #b0b0b0"></div>
<div class="a" style="left:1260px;top:268px;width:12px;height:1px;background:#b0b0b0"></div>
<svg class="a" style="left:1263px;top:263px" width="7" height="4" viewBox="0 0 7 4"><path d="M1 3.5 H6 L3.5 0.5 Z" fill="#000"/></svg>
<svg class="a" style="left:1263px;top:270px" width="7" height="4" viewBox="0 0 7 4"><path d="M1 0.5 H6 L3.5 3.5 Z" fill="#000"/></svg>
<div class="t" style="left:1281px;top:259px;font-size:11px">₴/мин.</div>
<div class="t" style="left:779px;top:290px;font-size:11px">Тариф "Почасовка"</div>
<div class="a" style="left:1208px;top:285px;width:67px;height:21px;background:#fff;border:1px solid #7a7a7a"></div>
<div class="c" style="left:1212px;top:285px;height:21px;line-height:21px;font-size:11px;color:#000">240,00</div>
<div class="a" style="left:1259px;top:287px;width:14px;height:17px;background:#f4f4f4;border:1px solid #b0b0b0"></div>
<div class="a" style="left:1260px;top:295px;width:12px;height:1px;background:#b0b0b0"></div>
<svg class="a" style="left:1263px;top:290px" width="7" height="4" viewBox="0 0 7 4"><path d="M1 3.5 H6 L3.5 0.5 Z" fill="#000"/></svg>
<svg class="a" style="left:1263px;top:297px" width="7" height="4" viewBox="0 0 7 4"><path d="M1 0.5 H6 L3.5 3.5 Z" fill="#000"/></svg>
<div class="t" style="left:1281px;top:286px;font-size:11px">₴/час</div>
<div class="a" style="left:774px;top:313px;width:543px;height:1px;background:#a0a0a0"></div>
<div class="a" style="left:774px;top:314px;width:543px;height:1px;background:#fff"></div>
<div class="a" style="left:774px;top:375px;width:543px;height:1px;background:#a0a0a0"></div>
<div class="a" style="left:774px;top:376px;width:543px;height:1px;background:#fff"></div>
<div class="a" style="left:779px;top:325px;width:13px;height:13px;background:#fff;border:1px solid #333"></div>
<div class="t" style="left:795px;top:325px;font-size:11.3px">Доплата за снег</div>
<div class="a" style="left:1060px;top:321px;width:176px;height:21px;background:#cccccc;border:1px solid #bfbfbf;overflow:hidden"></div>
<div class="c" style="left:1063px;top:322px;width:154px;height:21px;line-height:21px;font-size:10.8px;color:#838383">Коэффициент к сумме заказа</div>
<svg class="a" style="left:1220px;top:329px" width="10" height="6" viewBox="0 0 10 6"><path d="M0.5 0.5 L5 5 L9.5 0.5" fill="none" stroke="#a8a8a8" stroke-width="1"/></svg>
<div class="a" style="left:1242px;top:321px;width:67px;height:21px;background:#fff;border:1px solid #d5d5d5"></div>
<div class="c" style="left:1246px;top:321px;height:21px;line-height:21px;font-size:11px;color:#6d6d6d">95,00</div>
<div class="a" style="left:1293px;top:323px;width:14px;height:17px;background:#f4f4f4;border:1px solid #dcdcdc"></div>
<div class="a" style="left:1294px;top:331px;width:12px;height:1px;background:#dcdcdc"></div>
<svg class="a" style="left:1297px;top:326px" width="7" height="4" viewBox="0 0 7 4"><path d="M1 3.5 H6 L3.5 0.5 Z" fill="#7a7a7a"/></svg>
<svg class="a" style="left:1297px;top:333px" width="7" height="4" viewBox="0 0 7 4"><path d="M1 0.5 H6 L3.5 3.5 Z" fill="#7a7a7a"/></svg>
<div class="a" style="left:779px;top:352px;width:13px;height:13px;background:#fff;border:1px solid #333"></div>
<div class="t" style="left:795px;top:352px;font-size:11.3px">Доплата за праздник</div>
<div class="a" style="left:1060px;top:348px;width:176px;height:21px;background:#cccccc;border:1px solid #bfbfbf;overflow:hidden"></div>
<div class="c" style="left:1063px;top:349px;width:154px;height:21px;line-height:21px;font-size:10.8px;color:#838383">Коэффициент к сумме заказа</div>
<svg class="a" style="left:1220px;top:356px" width="10" height="6" viewBox="0 0 10 6"><path d="M0.5 0.5 L5 5 L9.5 0.5" fill="none" stroke="#a8a8a8" stroke-width="1"/></svg>
<div class="a" style="left:1242px;top:348px;width:67px;height:21px;background:#fff;border:1px solid #d5d5d5"></div>
<div class="c" style="left:1246px;top:348px;height:21px;line-height:21px;font-size:11px;color:#6d6d6d">150,00</div>
<div class="a" style="left:1293px;top:350px;width:14px;height:17px;background:#f4f4f4;border:1px solid #dcdcdc"></div>
<div class="a" style="left:1294px;top:358px;width:12px;height:1px;background:#dcdcdc"></div>
<svg class="a" style="left:1297px;top:353px" width="7" height="4" viewBox="0 0 7 4"><path d="M1 3.5 H6 L3.5 0.5 Z" fill="#7a7a7a"/></svg>
<svg class="a" style="left:1297px;top:360px" width="7" height="4" viewBox="0 0 7 4"><path d="M1 0.5 H6 L3.5 3.5 Z" fill="#7a7a7a"/></svg>
<div class="a" style="left:779px;top:386px;width:13px;height:13px;background:#fff;border:1px solid #333"></div>
<div class="t" style="left:795px;top:386px;font-size:11.3px">Доплата за предв.</div>
<div class="a" style="left:1060px;top:382px;width:176px;height:21px;background:#cccccc;border:1px solid #bfbfbf;overflow:hidden"></div>
<div class="c" style="left:1063px;top:383px;width:154px;height:21px;line-height:21px;font-size:10.8px;color:#838383">Доплата к сумме заказа</div>
<svg class="a" style="left:1220px;top:390px" width="10" height="6" viewBox="0 0 10 6"><path d="M0.5 0.5 L5 5 L9.5 0.5" fill="none" stroke="#a8a8a8" stroke-width="1"/></svg>
<div class="a" style="left:1242px;top:382px;width:67px;height:21px;background:#fff;border:1px solid #d5d5d5"></div>
<div class="c" style="left:1246px;top:382px;height:21px;line-height:21px;font-size:11px;color:#6d6d6d">0,00</div>
<div class="a" style="left:1293px;top:384px;width:14px;height:17px;background:#f4f4f4;border:1px solid #dcdcdc"></div>
<div class="a" style="left:1294px;top:392px;width:12px;height:1px;background:#dcdcdc"></div>
<svg class="a" style="left:1297px;top:387px" width="7" height="4" viewBox="0 0 7 4"><path d="M1 3.5 H6 L3.5 0.5 Z" fill="#7a7a7a"/></svg>
<svg class="a" style="left:1297px;top:394px" width="7" height="4" viewBox="0 0 7 4"><path d="M1 0.5 H6 L3.5 3.5 Z" fill="#7a7a7a"/></svg>
<div class="a" style="left:779px;top:413px;width:13px;height:13px;background:#fff;border:1px solid #333"></div>
<svg class="a" style="left:781px;top:415px" width="9" height="9" viewBox="0 0 9 9"><path d="M0.8 4.5 L3.3 7.2 L8.3 1.2" fill="none" stroke="#222" stroke-width="1.1"/></svg>
<div class="t" style="left:795px;top:413px;font-size:11.3px">Доплата за багаж</div>
<div class="a" style="left:1060px;top:409px;width:176px;height:21px;background:#e5e5e5;border:1px solid #adadad;overflow:hidden"></div>
<div class="c" style="left:1063px;top:410px;width:154px;height:21px;line-height:21px;font-size:10.8px;color:#000">Доплата к сумме заказа</div>
<svg class="a" style="left:1220px;top:417px" width="10" height="6" viewBox="0 0 10 6"><path d="M0.5 0.5 L5 5 L9.5 0.5" fill="none" stroke="#333" stroke-width="1"/></svg>
<div class="a" style="left:1242px;top:409px;width:67px;height:21px;background:#fff;border:1px solid #7a7a7a"></div>
<div class="c" style="left:1246px;top:409px;height:21px;line-height:21px;font-size:11px;color:#000">20,00</div>
<div class="a" style="left:1293px;top:411px;width:14px;height:17px;background:#f4f4f4;border:1px solid #b0b0b0"></div>
<div class="a" style="left:1294px;top:419px;width:12px;height:1px;background:#b0b0b0"></div>
<svg class="a" style="left:1297px;top:414px" width="7" height="4" viewBox="0 0 7 4"><path d="M1 3.5 H6 L3.5 0.5 Z" fill="#000"/></svg>
<svg class="a" style="left:1297px;top:421px" width="7" height="4" viewBox="0 0 7 4"><path d="M1 0.5 H6 L3.5 3.5 Z" fill="#000"/></svg>
<div class="a" style="left:779px;top:440px;width:13px;height:13px;background:#fff;border:1px solid #333"></div>
<svg class="a" style="left:781px;top:442px" width="9" height="9" viewBox="0 0 9 9"><path d="M0.8 4.5 L3.3 7.2 L8.3 1.2" fill="none" stroke="#222" stroke-width="1.1"/></svg>
<div class="t" style="left:795px;top:440px;font-size:11.3px">Доплата за животное</div>
<div class="a" style="left:1060px;top:436px;width:176px;height:21px;background:#e5e5e5;border:1px solid #adadad;overflow:hidden"></div>
<div class="c" style="left:1063px;top:437px;width:154px;height:21px;line-height:21px;font-size:10.8px;color:#000">Доплата к сумме заказа</div>
<svg class="a" style="left:1220px;top:444px" width="10" height="6" viewBox="0 0 10 6"><path d="M0.5 0.5 L5 5 L9.5 0.5" fill="none" stroke="#333" stroke-width="1"/></svg>
<div class="a" style="left:1242px;top:436px;width:67px;height:21px;background:#fff;border:1px solid #7a7a7a"></div>
<div class="c" style="left:1246px;top:436px;height:21px;line-height:21px;font-size:11px;color:#000">20,00</div>
<div class="a" style="left:1293px;top:438px;width:14px;height:17px;background:#f4f4f4;border:1px solid #b0b0b0"></div>
<div class="a" style="left:1294px;top:446px;width:12px;height:1px;background:#b0b0b0"></div>
<svg class="a" style="left:1297px;top:441px" width="7" height="4" viewBox="0 0 7 4"><path d="M1 3.5 H6 L3.5 0.5 Z" fill="#000"/></svg>
<svg class="a" style="left:1297px;top:448px" width="7" height="4" viewBox="0 0 7 4"><path d="M1 0.5 H6 L3.5 3.5 Z" fill="#000"/></svg>
<div class="a" style="left:779px;top:467px;width:13px;height:13px;background:#fff;border:1px solid #333"></div>
<svg class="a" style="left:781px;top:469px" width="9" height="9" viewBox="0 0 9 9"><path d="M0.8 4.5 L3.3 7.2 L8.3 1.2" fill="none" stroke="#222" stroke-width="1.1"/></svg>
<div class="t" style="left:795px;top:467px;font-size:11.3px">Доплата за кур. доставку</div>
<div class="a" style="left:1060px;top:463px;width:176px;height:21px;background:#e5e5e5;border:1px solid #adadad;overflow:hidden"></div>
<div class="c" style="left:1063px;top:464px;width:154px;height:21px;line-height:21px;font-size:10.8px;color:#000">Доплата к сумме заказа</div>
<svg class="a" style="left:1220px;top:471px" width="10" height="6" viewBox="0 0 10 6"><path d="M0.5 0.5 L5 5 L9.5 0.5" fill="none" stroke="#333" stroke-width="1"/></svg>
<div class="a" style="left:1242px;top:463px;width:67px;height:21px;background:#fff;border:1px solid #7a7a7a"></div>
<div class="c" style="left:1246px;top:463px;height:21px;line-height:21px;font-size:11px;color:#000">30,00</div>
<div class="a" style="left:1293px;top:465px;width:14px;height:17px;background:#f4f4f4;border:1px solid #b0b0b0"></div>
<div class="a" style="left:1294px;top:473px;width:12px;height:1px;background:#b0b0b0"></div>
<svg class="a" style="left:1297px;top:468px" width="7" height="4" viewBox="0 0 7 4"><path d="M1 3.5 H6 L3.5 0.5 Z" fill="#000"/></svg>
<svg class="a" style="left:1297px;top:475px" width="7" height="4" viewBox="0 0 7 4"><path d="M1 0.5 H6 L3.5 3.5 Z" fill="#000"/></svg>
<div class="a" style="left:779px;top:494px;width:13px;height:13px;background:#fff;border:1px solid #333"></div>
<div class="t" style="left:795px;top:494px;font-size:11.3px">Доплата за кондиционер</div>
<div class="a" style="left:1060px;top:490px;width:176px;height:21px;background:#cccccc;border:1px solid #bfbfbf;overflow:hidden"></div>
<div class="c" style="left:1063px;top:491px;width:154px;height:21px;line-height:21px;font-size:10.8px;color:#838383">Доплата к сумме заказа</div>
<svg class="a" style="left:1220px;top:498px" width="10" height="6" viewBox="0 0 10 6"><path d="M0.5 0.5 L5 5 L9.5 0.5" fill="none" stroke="#a8a8a8" stroke-width="1"/></svg>
<div class="a" style="left:1242px;top:490px;width:67px;height:21px;background:#fff;border:1px solid #d5d5d5"></div>
<div class="c" style="left:1246px;top:490px;height:21px;line-height:21px;font-size:11px;color:#6d6d6d">0,00</div>
<div class="a" style="left:1293px;top:492px;width:14px;height:17px;background:#f4f4f4;border:1px solid #dcdcdc"></div>
<div class="a" style="left:1294px;top:500px;width:12px;height:1px;background:#dcdcdc"></div>
<svg class="a" style="left:1297px;top:495px" width="7" height="4" viewBox="0 0 7 4"><path d="M1 3.5 H6 L3.5 0.5 Z" fill="#7a7a7a"/></svg>
<svg class="a" style="left:1297px;top:502px" width="7" height="4" viewBox="0 0 7 4"><path d="M1 0.5 H6 L3.5 3.5 Z" fill="#7a7a7a"/></svg>
<div class="a" style="left:779px;top:521px;width:13px;height:13px;background:#fff;border:1px solid #333"></div>
<div class="t" style="left:795px;top:521px;font-size:11.3px">Доплата за безнал.</div>
<div class="a" style="left:1060px;top:517px;width:176px;height:21px;background:#cccccc;border:1px solid #bfbfbf;overflow:hidden"></div>
<div class="c" style="left:1063px;top:518px;width:154px;height:21px;line-height:21px;font-size:10.8px;color:#838383">Доплата к сумме заказа</div>
<svg class="a" style="left:1220px;top:525px" width="10" height="6" viewBox="0 0 10 6"><path d="M0.5 0.5 L5 5 L9.5 0.5" fill="none" stroke="#a8a8a8" stroke-width="1"/></svg>
<div class="a" style="left:1242px;top:517px;width:67px;height:21px;background:#fff;border:1px solid #d5d5d5"></div>
<div class="c" style="left:1246px;top:517px;height:21px;line-height:21px;font-size:11px;color:#6d6d6d">0,00</div>
<div class="a" style="left:1293px;top:519px;width:14px;height:17px;background:#f4f4f4;border:1px solid #dcdcdc"></div>
<div class="a" style="left:1294px;top:527px;width:12px;height:1px;background:#dcdcdc"></div>
<svg class="a" style="left:1297px;top:522px" width="7" height="4" viewBox="0 0 7 4"><path d="M1 3.5 H6 L3.5 0.5 Z" fill="#7a7a7a"/></svg>
<svg class="a" style="left:1297px;top:529px" width="7" height="4" viewBox="0 0 7 4"><path d="M1 0.5 H6 L3.5 3.5 Z" fill="#7a7a7a"/></svg>
<div class="a" style="left:779px;top:548px;width:13px;height:13px;background:#fff;border:1px solid #333"></div>
<div class="t" style="left:795px;top:548px;font-size:11.3px">Доплата за чек</div>
<div class="a" style="left:1060px;top:544px;width:176px;height:21px;background:#cccccc;border:1px solid #bfbfbf;overflow:hidden"></div>
<div class="c" style="left:1063px;top:545px;width:154px;height:21px;line-height:21px;font-size:10.8px;color:#838383">Доплата к сумме заказа</div>
<svg class="a" style="left:1220px;top:552px" width="10" height="6" viewBox="0 0 10 6"><path d="M0.5 0.5 L5 5 L9.5 0.5" fill="none" stroke="#a8a8a8" stroke-width="1"/></svg>
<div class="a" style="left:1242px;top:544px;width:67px;height:21px;background:#fff;border:1px solid #d5d5d5"></div>
<div class="c" style="left:1246px;top:544px;height:21px;line-height:21px;font-size:11px;color:#6d6d6d">0,00</div>
<div class="a" style="left:1293px;top:546px;width:14px;height:17px;background:#f4f4f4;border:1px solid #dcdcdc"></div>
<div class="a" style="left:1294px;top:554px;width:12px;height:1px;background:#dcdcdc"></div>
<svg class="a" style="left:1297px;top:549px" width="7" height="4" viewBox="0 0 7 4"><path d="M1 3.5 H6 L3.5 0.5 Z" fill="#7a7a7a"/></svg>
<svg class="a" style="left:1297px;top:556px" width="7" height="4" viewBox="0 0 7 4"><path d="M1 0.5 H6 L3.5 3.5 Z" fill="#7a7a7a"/></svg>
<div class="a" style="left:779px;top:575px;width:13px;height:13px;background:#fff;border:1px solid #333"></div>
<svg class="a" style="left:781px;top:577px" width="9" height="9" viewBox="0 0 9 9"><path d="M0.8 4.5 L3.3 7.2 L8.3 1.2" fill="none" stroke="#222" stroke-width="1.1"/></svg>
<div class="t" style="left:795px;top:575px;font-size:11.3px">Подача</div>
<div class="a" style="left:1060px;top:571px;width:176px;height:21px;background:#e5e5e5;border:1px solid #adadad;overflow:hidden"></div>
<div class="c" style="left:1063px;top:572px;width:154px;height:21px;line-height:21px;font-size:10.8px;color:#000">Доплата к сумме заказа</div>
<svg class="a" style="left:1220px;top:579px" width="10" height="6" viewBox="0 0 10 6"><path d="M0.5 0.5 L5 5 L9.5 0.5" fill="none" stroke="#333" stroke-width="1"/></svg>
<div class="a" style="left:1242px;top:571px;width:67px;height:21px;background:#fff;border:1px solid #7a7a7a"></div>
<div class="c" style="left:1246px;top:571px;height:21px;line-height:21px;font-size:11px;color:#000">50,00</div>
<div class="a" style="left:1293px;top:573px;width:14px;height:17px;background:#f4f4f4;border:1px solid #b0b0b0"></div>
<div class="a" style="left:1294px;top:581px;width:12px;height:1px;background:#b0b0b0"></div>
<svg class="a" style="left:1297px;top:576px" width="7" height="4" viewBox="0 0 7 4"><path d="M1 3.5 H6 L3.5 0.5 Z" fill="#000"/></svg>
<svg class="a" style="left:1297px;top:583px" width="7" height="4" viewBox="0 0 7 4"><path d="M1 0.5 H6 L3.5 3.5 Z" fill="#000"/></svg>
<div class="a" style="left:779px;top:602px;width:13px;height:13px;background:#fff;border:1px solid #333"></div>
<div class="t" style="left:795px;top:602px;font-size:11.3px">Доплата за таксометр</div>
<div class="a" style="left:1060px;top:598px;width:176px;height:21px;background:#cccccc;border:1px solid #bfbfbf;overflow:hidden"></div>
<div class="c" style="left:1063px;top:599px;width:154px;height:21px;line-height:21px;font-size:10.8px;color:#838383">Доплата к стандартному тарифу</div>
<svg class="a" style="left:1220px;top:606px" width="10" height="6" viewBox="0 0 10 6"><path d="M0.5 0.5 L5 5 L9.5 0.5" fill="none" stroke="#a8a8a8" stroke-width="1"/></svg>
<div class="a" style="left:1242px;top:598px;width:67px;height:21px;background:#fff;border:1px solid #d5d5d5"></div>
<div class="c" style="left:1246px;top:598px;height:21px;line-height:21px;font-size:11px;color:#6d6d6d">0,00</div>
<div class="a" style="left:1293px;top:600px;width:14px;height:17px;background:#f4f4f4;border:1px solid #dcdcdc"></div>
<div class="a" style="left:1294px;top:608px;width:12px;height:1px;background:#dcdcdc"></div>
<svg class="a" style="left:1297px;top:603px" width="7" height="4" viewBox="0 0 7 4"><path d="M1 3.5 H6 L3.5 0.5 Z" fill="#7a7a7a"/></svg>
<svg class="a" style="left:1297px;top:610px" width="7" height="4" viewBox="0 0 7 4"><path d="M1 0.5 H6 L3.5 3.5 Z" fill="#7a7a7a"/></svg>
<div class="a" style="left:779px;top:629px;width:13px;height:13px;background:#fff;border:1px solid #333"></div>
<div class="t" style="left:795px;top:629px;font-size:11.3px">Доплата за терминал</div>
<div class="a" style="left:1060px;top:625px;width:176px;height:21px;background:#cccccc;border:1px solid #bfbfbf;overflow:hidden"></div>
<div class="c" style="left:1063px;top:626px;width:154px;height:21px;line-height:21px;font-size:10.8px;color:#838383">Доплата к стандартному тарифу</div>
<svg class="a" style="left:1220px;top:633px" width="10" height="6" viewBox="0 0 10 6"><path d="M0.5 0.5 L5 5 L9.5 0.5" fill="none" stroke="#a8a8a8" stroke-width="1"/></svg>
<div class="a" style="left:1242px;top:625px;width:67px;height:21px;background:#fff;border:1px solid #d5d5d5"></div>
<div class="c" style="left:1246px;top:625px;height:21px;line-height:21px;font-size:11px;color:#6d6d6d">0,00</div>
<div class="a" style="left:1293px;top:627px;width:14px;height:17px;background:#f4f4f4;border:1px solid #dcdcdc"></div>
<div class="a" style="left:1294px;top:635px;width:12px;height:1px;background:#dcdcdc"></div>
<svg class="a" style="left:1297px;top:630px" width="7" height="4" viewBox="0 0 7 4"><path d="M1 3.5 H6 L3.5 0.5 Z" fill="#7a7a7a"/></svg>
<svg class="a" style="left:1297px;top:637px" width="7" height="4" viewBox="0 0 7 4"><path d="M1 0.5 H6 L3.5 3.5 Z" fill="#7a7a7a"/></svg>
<div class="a" style="left:779px;top:656px;width:13px;height:13px;background:#fff;border:1px solid #333"></div>
<div class="t" style="left:795px;top:656px;font-size:11.3px">Доплата за онлайн</div>
<div class="a" style="left:1060px;top:652px;width:176px;height:21px;background:#cccccc;border:1px solid #bfbfbf;overflow:hidden"></div>
<div class="c" style="left:1063px;top:653px;width:154px;height:21px;line-height:21px;font-size:10.8px;color:#838383">Коэффициент к сумме заказа</div>
<svg class="a" style="left:1220px;top:660px" width="10" height="6" viewBox="0 0 10 6"><path d="M0.5 0.5 L5 5 L9.5 0.5" fill="none" stroke="#a8a8a8" stroke-width="1"/></svg>
<div class="a" style="left:1242px;top:652px;width:67px;height:21px;background:#fff;border:1px solid #d5d5d5"></div>
<div class="c" style="left:1246px;top:652px;height:21px;line-height:21px;font-size:11px;color:#6d6d6d">120,00</div>
<div class="a" style="left:1293px;top:654px;width:14px;height:17px;background:#f4f4f4;border:1px solid #dcdcdc"></div>
<div class="a" style="left:1294px;top:662px;width:12px;height:1px;background:#dcdcdc"></div>
<svg class="a" style="left:1297px;top:657px" width="7" height="4" viewBox="0 0 7 4"><path d="M1 3.5 H6 L3.5 0.5 Z" fill="#7a7a7a"/></svg>
<svg class="a" style="left:1297px;top:664px" width="7" height="4" viewBox="0 0 7 4"><path d="M1 0.5 H6 L3.5 3.5 Z" fill="#7a7a7a"/></svg>
<div class="a" style="left:894px;top:683px;width:13px;height:13px;background:#fff;border:1px solid #c8c8c8"></div>
<div class="t" style="left:910px;top:682px;font-size:11px;color:#6d6d6d">Компенсация водителю</div>
<div class="a" style="left:1169px;top:679px;width:67px;height:21px;background:#fff;border:1px solid #d5d5d5"></div>
<div class="c" style="left:1173px;top:679px;height:21px;line-height:21px;font-size:11px;color:#6d6d6d">100,00</div>
<div class="a" style="left:1220px;top:681px;width:14px;height:17px;background:#f4f4f4;border:1px solid #dcdcdc"></div>
<div class="a" style="left:1221px;top:689px;width:12px;height:1px;background:#dcdcdc"></div>
<svg class="a" style="left:1224px;top:684px" width="7" height="4" viewBox="0 0 7 4"><path d="M1 3.5 H6 L3.5 0.5 Z" fill="#7a7a7a"/></svg>
<svg class="a" style="left:1224px;top:691px" width="7" height="4" viewBox="0 0 7 4"><path d="M1 0.5 H6 L3.5 3.5 Z" fill="#7a7a7a"/></svg>
<div class="a" style="left:1242px;top:679px;width:67px;height:21px;background:#cccccc;border:1px solid #bfbfbf;overflow:hidden"></div>
<div class="c" style="left:1245px;top:680px;width:45px;height:21px;line-height:21px;font-size:10.8px;color:#838383">%</div>
<svg class="a" style="left:1293px;top:687px" width="10" height="6" viewBox="0 0 10 6"><path d="M0.5 0.5 L5 5 L9.5 0.5" fill="none" stroke="#a8a8a8" stroke-width="1"/></svg>
<div class="a" style="left:954px;top:710px;width:13px;height:13px;background:#fff;border:1px solid #c8c8c8"></div>
<div class="t" style="left:969px;top:709px;font-size:10.5px;color:#6d6d6d">Максимальная сумма</div>
<div class="a" style="left:1169px;top:706px;width:67px;height:21px;background:#fff;border:1px solid #d5d5d5"></div>
<div class="c" style="left:1173px;top:706px;height:21px;line-height:21px;font-size:11px;color:#6d6d6d">100,00</div>
<div class="a" style="left:1220px;top:708px;width:14px;height:17px;background:#f4f4f4;border:1px solid #dcdcdc"></div>
<div class="a" style="left:1221px;top:716px;width:12px;height:1px;background:#dcdcdc"></div>
<svg class="a" style="left:1224px;top:711px" width="7" height="4" viewBox="0 0 7 4"><path d="M1 3.5 H6 L3.5 0.5 Z" fill="#7a7a7a"/></svg>
<svg class="a" style="left:1224px;top:718px" width="7" height="4" viewBox="0 0 7 4"><path d="M1 0.5 H6 L3.5 3.5 Z" fill="#7a7a7a"/></svg>
<div class="t" style="left:1242px;top:709px;font-size:11px">₴</div>
<div class="a" style="left:770px;top:759px;width:546px;height:1px;background:#fff"></div>
<div class="a" style="left:1150px;top:764px;width:73px;height:23px;background:#e1e1e1;border:1px solid #adadad"></div>
<div class="c" style="left:1150px;top:764px;width:73px;height:23px;line-height:23px;text-align:center;font-size:11.5px">OK</div>
<div class="a" style="left:1232px;top:764px;width:73px;height:23px;background:#e1e1e1;border:1px solid #adadad"></div>
<div class="c" style="left:1232px;top:764px;width:73px;height:23px;line-height:23px;text-align:center;font-size:11.5px">Отмена</div>
<div class="a" style="left:1894px;top:985px;width:2px;height:2px;background:#b8b8b8"></div>
<div class="a" style="left:1890px;top:989px;width:2px;height:2px;background:#b8b8b8"></div>
<div class="a" style="left:1894px;top:989px;width:2px;height:2px;background:#b8b8b8"></div>
<div class="a" style="left:1886px;top:993px;width:2px;height:2px;background:#b8b8b8"></div>
<div class="a" style="left:1890px;top:993px;width:2px;height:2px;background:#b8b8b8"></div>
<div class="a" style="left:1894px;top:993px;width:2px;height:2px;background:#b8b8b8"></div>
</body></html>
